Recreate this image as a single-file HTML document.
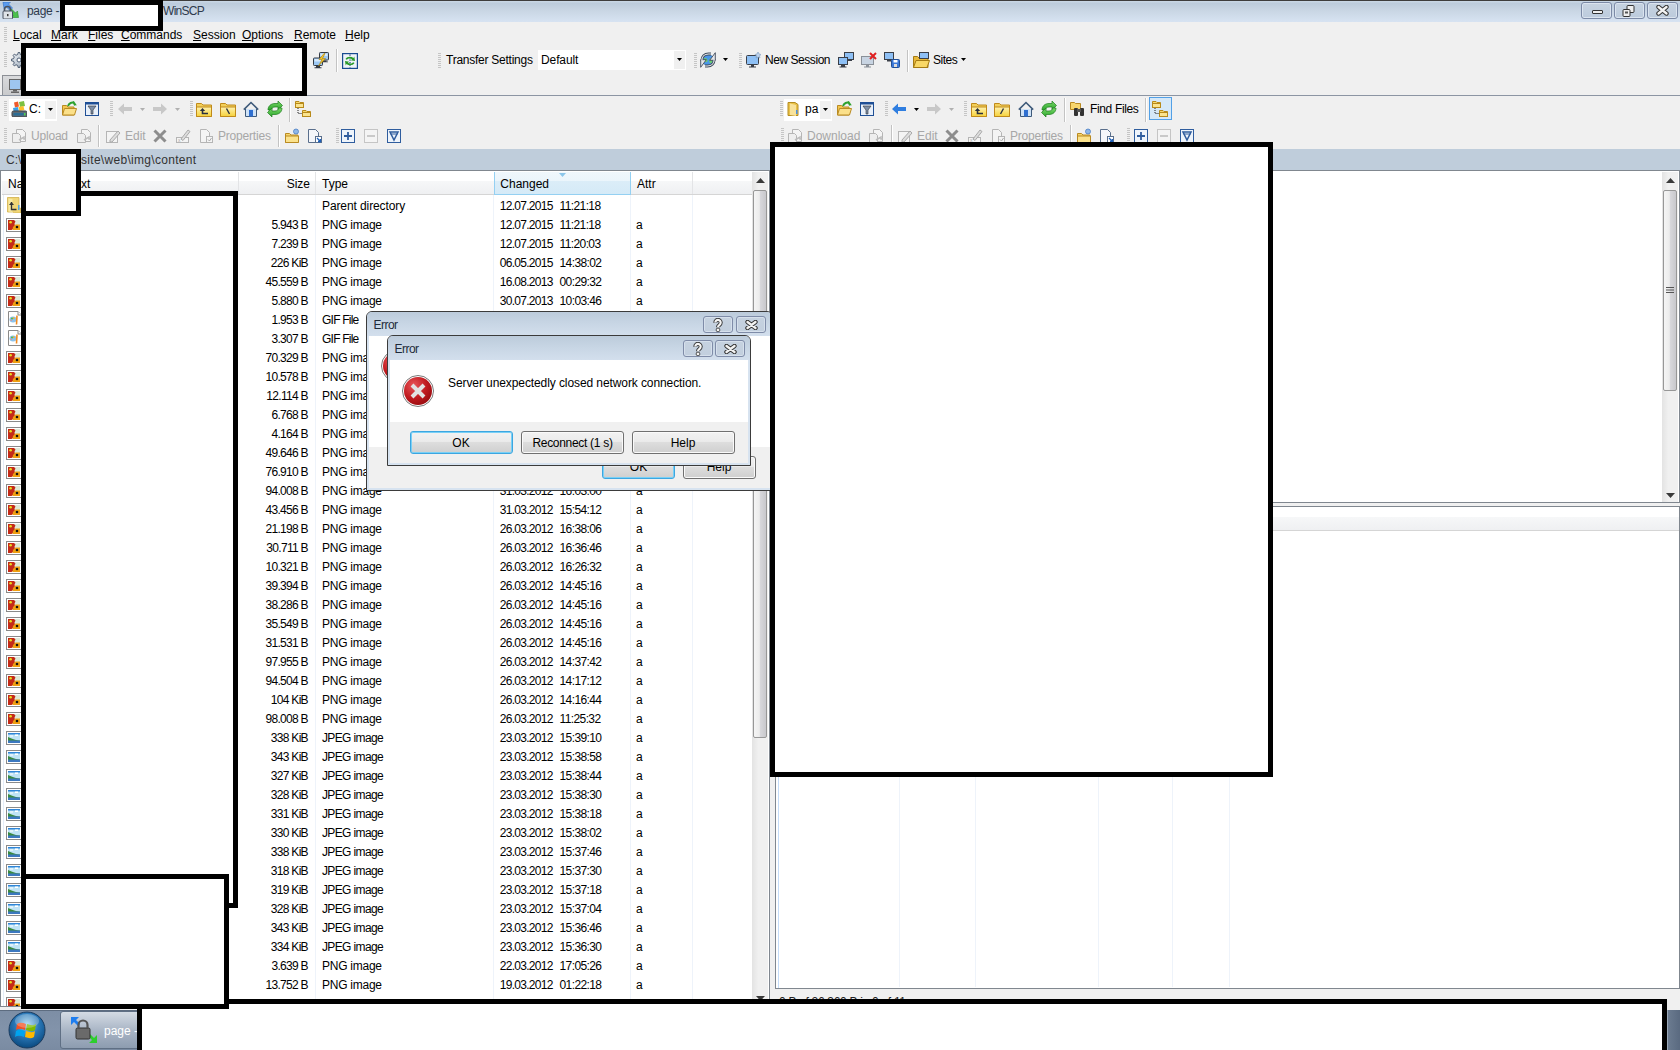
<!DOCTYPE html>
<html><head><meta charset="utf-8"><title>WinSCP</title><style>
*{margin:0;padding:0;box-sizing:border-box}
html,body{width:1680px;height:1050px;overflow:hidden;background:#f0f0f0;font-family:"Liberation Sans",sans-serif;font-size:12px;color:#000}
.a{position:absolute}
.t{position:absolute;white-space:nowrap;line-height:14px;font-size:12px}
.red{position:absolute;background:#fff;border:5px solid #000}
.grip{position:absolute;width:3px;background:repeating-linear-gradient(#c5c5c5 0 1px,transparent 1px 2px)}
.sep{position:absolute;width:1px;background:#bcbcbc;border-right:1px solid #fff}
.dis{color:#a3a3a3}
.u{text-decoration:underline}
.row{position:absolute;left:0;height:19px}
.ico{position:absolute;width:16px;height:16px}
</style></head><body>
<div class="a" style="left:0px;top:0px;width:1680px;height:22px;background:linear-gradient(#c8d6e4 0,#c8d6e4 2px,#bccbdb 3px,#c8d5e3 45%,#d7e3f2)"></div>
<div class="a" style="left:0px;top:0px;width:1680px;height:1px;background:#3e3d3c"></div>
<svg class="a" style="left:2px;top:2px" width="17" height="17" viewBox="0 0 17 17"><path d="M1 0h7.5l-2 2 4 4-2.5 2.5-4-4-2 2z" fill="#5a9cf0" stroke="#2f6cc0" stroke-width=".6"/><path d="M16.5 15.5h-7.5l2-2-4-4 2.5-2.5 4 4 2-2z" fill="#4cc04c" stroke="#2a8a2a" stroke-width=".6"/><path d="M2.5 9.5v-2a3 3 0 0 1 6 0v2" stroke="#4a5260" stroke-width="1.6" fill="none"/><rect x="1" y="9" width="9.5" height="8" rx="1" fill="#dfe3e8" stroke="#4a5260"/><rect x="5.2" y="12" width="1.2" height="2.2" fill="#111"/></svg>
<div class="t" style="left:27px;top:3.84px;color:#2e3a4c;letter-spacing:-0.3px">page -</div>
<div class="t" style="left:163px;top:3.84px;color:#2e3a4c;letter-spacing:-0.7px">WinSCP</div>
<div class="a" style="left:1581px;top:2px;width:31px;height:17px;border:1px solid #7c8aa6;border-radius:3px;background:linear-gradient(#c7d3e1,#bccbdc);box-shadow:inset 0 0 0 1px #dbe4ef"></div>
<div class="a" style="left:1614px;top:2px;width:31px;height:17px;border:1px solid #7c8aa6;border-radius:3px;background:linear-gradient(#c7d3e1,#bccbdc);box-shadow:inset 0 0 0 1px #dbe4ef"></div>
<div class="a" style="left:1647px;top:2px;width:31px;height:17px;border:1px solid #7c8aa6;border-radius:3px;background:linear-gradient(#c7d3e1,#bccbdc);box-shadow:inset 0 0 0 1px #dbe4ef"></div>
<div class="a" style="left:1592px;top:10px;width:11px;height:4px;background:#eee;border:1px solid #333;border-radius:1px"></div>
<svg class="a" style="left:1622px;top:5px" width="14" height="12" viewBox="0 0 14 12"><rect x="5" y="0.5" width="7" height="7" rx="1" fill="#eee" stroke="#333"/><rect x="1" y="4.5" width="7" height="7" rx="1" fill="#eee" stroke="#333"/><rect x="3" y="6.5" width="3" height="2" fill="#555"/></svg>
<svg class="a" style="left:1656px;top:5px" width="13" height="11" viewBox="0 0 13 11"><path d="M2.5 2l8 6.5M10.5 2l-8 6.5" stroke="#333" stroke-width="4.4" stroke-linecap="round"/><path d="M2.5 2l8 6.5M10.5 2l-8 6.5" stroke="#f2f2f2" stroke-width="2.4" stroke-linecap="round"/></svg>
<div class="grip" style="left:4px;top:27px;height:15px"></div>
<div class="t" style="left:13px;top:27.84px;color:#000"><span class="u">L</span>ocal</div>
<div class="t" style="left:51px;top:27.84px;color:#000"><span class="u">M</span>ark</div>
<div class="t" style="left:88px;top:27.84px;color:#000"><span class="u">F</span>iles</div>
<div class="t" style="left:121px;top:27.84px;color:#000"><span class="u">C</span>ommands</div>
<div class="t" style="left:193px;top:27.84px;color:#000"><span class="u">S</span>ession</div>
<div class="t" style="left:242px;top:27.84px;color:#000"><span class="u">O</span>ptions</div>
<div class="t" style="left:294px;top:27.84px;color:#000"><span class="u">R</span>emote</div>
<div class="t" style="left:345px;top:27.84px;color:#000"><span class="u">H</span>elp</div>
<div class="grip" style="left:4px;top:52px;height:15px"></div>
<svg class="a" style="left:11px;top:52px" width="16" height="16" viewBox="0 0 16 16"><defs><linearGradient id="gg" x1="0" y1="0" x2="1" y2="1"><stop offset="0" stop-color="#f2f5f8"/><stop offset="1" stop-color="#9aa8b8"/></linearGradient></defs><path d="M13.47 6.78 L15.45 7.10 L15.45 8.90 L13.47 9.22 L12.73 11.00 L13.90 12.63 L12.63 13.90 L11.00 12.73 L9.22 13.47 L8.90 15.45 L7.10 15.45 L6.78 13.47 L5.00 12.73 L3.37 13.90 L2.10 12.63 L3.27 11.00 L2.53 9.22 L0.55 8.90 L0.55 7.10 L2.53 6.78 L3.27 5.00 L2.10 3.37 L3.37 2.10 L5.00 3.27 L6.78 2.53 L7.10 0.55 L8.90 0.55 L9.22 2.53 L11.00 3.27 L12.63 2.10 L13.90 3.37 L12.73 5.00Z" fill="url(#gg)" stroke="#3f5068" stroke-width=".9"/><circle cx="8" cy="8" r="2" fill="#fff" stroke="#3f5068" stroke-width=".9"/></svg>
<svg class="a" style="left:313px;top:52px" width="16" height="17" viewBox="0 0 16 17"><rect x="6.5" y="0.5" width="9" height="7.5" rx=".8" fill="#9cc8f4" stroke="#343a44"/><rect x="7.5" y="1.5" width="7" height="2.5" fill="#d6e9fb"/><path d="M9.5 8.5h4v1h1.5v.8h-6" fill="#343a44"/><rect x="0.5" y="6" width="9" height="7.5" rx=".8" fill="#9cc8f4" stroke="#343a44"/><rect x="1.5" y="7" width="7" height="2.5" fill="#d6e9fb"/><path d="M3 14h4v1.2h1.5v1h-7v-1h1.5z" fill="#343a44"/><path d="M11 1.5l-5 6h3l-3.5 6.5 7-7.5h-3l2.5-5z" fill="#f4c52a" stroke="#a8800e" stroke-width=".6"/></svg>
<div class="a" style="left:336px;top:49px;width:1px;height:23px;background:#c3c3c3"></div><div class="a" style="left:337px;top:49px;width:1px;height:23px;background:#fff"></div>
<svg class="a" style="left:342px;top:53px" width="16" height="16" viewBox="0 0 16 16"><rect x="0.6" y="0.6" width="14.8" height="14.8" fill="#eef3f9" stroke="#184a90" stroke-width="1.2"/><path d="M8 1.5v13" stroke="#1d3f7a" stroke-width="1.2" stroke-dasharray="1.2 1.3"/><path d="M3.5 6c1.5-2.5 5.5-3 8-1l.8-1.5.7 4.5-4.3-.8 1.5-.9c-1.8-1.2-4.2-1-5.3.5z" fill="#2a9a2a"/><path d="M12.5 10c-1.5 2.5-5.5 3-8 1l-.8 1.5-.7-4.5 4.3.8-1.5.9c1.8 1.2 4.2 1 5.3-.5z" fill="#2a9a2a"/></svg>
<div class="grip" style="left:438px;top:53px;height:15px"></div>
<div class="t" style="left:446px;top:52.84px;letter-spacing:-0.25px">Transfer Settings</div>
<div class="a" style="left:538px;top:50px;width:148px;height:20px;background:#fff"></div>
<div class="a" style="left:674px;top:51px;width:11px;height:18px;background:#f0f0f0"></div>
<svg class="a" style="left:677px;top:58px" width="5" height="3" viewBox="0 0 5 3"><path d="M0 0h5l-2.5 3z" fill="#000"/></svg>
<div class="t" style="left:541px;top:52.84px;letter-spacing:-0.1px">Default</div>
<div class="grip" style="left:694px;top:53px;height:15px"></div>
<svg class="a" style="left:700px;top:52px" width="16" height="16" viewBox="0 0 16 16"><circle cx="8" cy="8" r="5.6" fill="#4a96e8" stroke="#2a6ab0" stroke-width=".6"/><path d="M4 6.5c1.5-1 3 0 3.5 1.5s-1 2.5-2.5 2-1.5-2.5-1-3.5zM10 6.5c1.5 0 2.5 1 2.5 2.5s-1.5 2.5-2.5 2-1-3.5 0-4.5z" fill="#6cd06c"/><path d="M1.8 8.8C1.8 4.6 4.5 2 8.5 2h2.5" stroke="#3e4a5a" stroke-width="2.8" fill="none"/><path d="M14.2 7.2c0 4.2-2.7 6.8-6.7 6.8H5" stroke="#3e4a5a" stroke-width="2.8" fill="none"/><path d="M15.3 .7v7.6h-5.6z" fill="#e4e6ea" stroke="#3e4a5a" stroke-width=".9" stroke-linejoin="round"/><path d="M.7 15.3V7.7h5.6z" fill="#e4e6ea" stroke="#3e4a5a" stroke-width=".9" stroke-linejoin="round"/><path d="M1.8 8.8C1.8 4.6 4.5 2 8.5 2h2.5" stroke="#e4e6ea" stroke-width="1.2" fill="none"/><path d="M14.2 7.2c0 4.2-2.7 6.8-6.7 6.8H5" stroke="#e4e6ea" stroke-width="1.2" fill="none"/></svg>
<svg class="a" style="left:723px;top:58px" width="5" height="3" viewBox="0 0 5 3"><path d="M0 0h5l-2.5 3z" fill="#000"/></svg>
<div class="grip" style="left:739px;top:53px;height:15px"></div>
<svg class="a" style="left:745px;top:52px" width="16" height="16" viewBox="0 0 16 16"><rect x="1.5" y="3.5" width="12" height="9" rx="1" fill="#8ec0f5" stroke="#3a3f48"/><path d="M6 13h3v1.5h2v1h-7v-1h2z" fill="#3a3f48"/><path d="M13 0l1 2 2 .5-1.5 1.5.5 2-2-1-2 1 .5-2L10 2.5l2-.5z" fill="#bcd2ec" stroke="#6b8bb0" stroke-width=".5"/></svg>
<div class="t" style="left:765px;top:52.84px;letter-spacing:-0.45px">New Session</div>
<svg class="a" style="left:838px;top:52px" width="16" height="16" viewBox="0 0 16 16"><rect x="6.5" y="0.5" width="9" height="7" fill="#8ec0f5" stroke="#3a3f48"/><rect x="0.5" y="5.5" width="9" height="7" fill="#8ec0f5" stroke="#3a3f48"/><path d="M3 13h4v1.5h1.5v1h-7v-1h1.5z" fill="#3a3f48"/><path d="M10 8h4v1h-4z" fill="#3a3f48"/></svg>
<svg class="a" style="left:861px;top:52px" width="16" height="16" viewBox="0 0 16 16"><rect x="0.5" y="4.5" width="12" height="8" fill="#c8d4e2" stroke="#8a9098"/><path d="M5 13h3v1.5h2v1h-7v-1h2z" fill="#8a9098"/><path d="M9 1l6 6M15 1l-6 6" stroke="#e02020" stroke-width="2"/></svg>
<svg class="a" style="left:884px;top:52px" width="16" height="16" viewBox="0 0 16 16"><rect x="0.5" y="0.5" width="9" height="7" fill="#8ec0f5" stroke="#3a3f48"/><path d="M3 8h4v1.5h-4z" fill="#3a3f48"/><rect x="7.5" y="7.5" width="8" height="8" rx="1" fill="#3b78d8" stroke="#214f96"/><rect x="9.5" y="8" width="4" height="2.5" fill="#fff"/><rect x="10" y="12" width="3" height="3" fill="#ddd"/></svg>
<div class="a" style="left:907px;top:50px;width:1px;height:22px;background:#c3c3c3"></div><div class="a" style="left:908px;top:50px;width:1px;height:22px;background:#fff"></div>
<svg class="a" style="left:913px;top:52px" width="17" height="16" viewBox="0 0 17 16"><path d="M0.5 4.5h4l1.5 1.5h9v9.5h-14.5z" fill="#e8b839" stroke="#a47a14"/><rect x="6.5" y="0.5" width="9" height="6" fill="#8ec0f5" stroke="#3a3f48"/><path d="M0.5 15.5l2.5-7h13.5l-2.5 7z" fill="#f8d766" stroke="#a47a14"/></svg>
<div class="t" style="left:933px;top:52.84px;letter-spacing:-0.5px">Sites</div>
<svg class="a" style="left:961px;top:58px" width="5" height="3" viewBox="0 0 5 3"><path d="M0 0h5l-2.5 3z" fill="#000"/></svg>
<div class="a" style="left:0px;top:95px;width:1680px;height:1px;background:#8c95a3"></div>
<div class="a" style="left:2px;top:75px;width:100px;height:20px;background:linear-gradient(#d9dadc,#c9cacc);border:1px solid #8d9096;border-bottom:none"></div>
<svg class="a" style="left:9px;top:79px" width="12" height="14" viewBox="0 0 12 14"><rect x="0.5" y="0.5" width="11" height="10" fill="#9ec6f0" stroke="#666"/><rect x="4" y="11" width="4" height="1.5" fill="#666"/><rect x="2" y="12.5" width="8" height="1.5" fill="#666"/></svg>
<div class="grip" style="left:4px;top:101px;height:15px"></div>
<div class="a" style="left:9px;top:99px;width:48px;height:22px;background:#fff"></div>
<div class="a" style="left:45px;top:101px;width:11px;height:18px;background:#f0f0f0"></div>
<svg class="a" style="left:11px;top:101px" width="16" height="16" viewBox="0 0 16 16"><path d="M3 1.5l4-1 1 5-4 1z" fill="#f05a2a"/><path d="M8 1l5-1 1 5-5 1z" fill="#7cc142"/><path d="M2 7l5-1 .8 4-5 1z" fill="#3aa0e8"/><path d="M7.5 6l5-1 .8 4-5 1z" fill="#fbc02d"/><rect x="1" y="10" width="15" height="6" rx="1.5" fill="#5b6b78" stroke="#444"/><rect x="2.5" y="12" width="10" height="2.5" fill="#2c6e96"/><rect x="13" y="12" width="1.5" height="2.5" fill="#4ed24e"/></svg>
<div class="t" style="left:29px;top:101.84px;">C:</div>
<svg class="a" style="left:48px;top:108px" width="5" height="3" viewBox="0 0 5 3"><path d="M0 0h5l-2.5 3z" fill="#000"/></svg>
<svg class="a" style="left:61px;top:101px" width="16" height="16" viewBox="0 0 16 16"><path d="M1.5 4.5h4l1.5 1.5h6v8h-11.5z" fill="#f2c650" stroke="#b98a22"/><path d="M1.5 14l2-6.5h12l-2 6.5z" fill="#fbe08a" stroke="#b98a22"/><path d="M7 5c1-3 4-4 6-3l-1-1.5M13 2l1 2.5" stroke="#2ea12e" stroke-width="2" fill="none"/></svg>
<svg class="a" style="left:84px;top:101px" width="16" height="16" viewBox="0 0 16 16"><rect x="1.5" y="1.5" width="13" height="13" fill="#e8f0fa" stroke="#1f4f95"/><rect x="1.5" y="1.5" width="13" height="2" fill="#1f4f95"/><path d="M4 5h8l-3 4v4h-2v-4z" fill="#7d8fa8" stroke="#333" stroke-width=".6"/></svg>
<div class="grip" style="left:110px;top:101px;height:15px"></div>
<svg class="a" style="left:117px;top:101px" width="16" height="16" viewBox="0 0 16 16"><path d="M1 8l6-5.5v3.5h8v4h-8v3.5z" fill="#c8c8c8"/></svg>
<svg class="a" style="left:140px;top:108px" width="5" height="3" viewBox="0 0 5 3"><path d="M0 0h5l-2.5 3z" fill="#b0b0b0"/></svg>
<svg class="a" style="left:152px;top:101px" width="16" height="16" viewBox="0 0 16 16"><path d="M15 8l-6-5.5v3.5h-8v4h8v3.5z" fill="#c8c8c8"/></svg>
<svg class="a" style="left:175px;top:108px" width="5" height="3" viewBox="0 0 5 3"><path d="M0 0h5l-2.5 3z" fill="#b0b0b0"/></svg>
<div class="grip" style="left:190px;top:101px;height:15px"></div>
<svg class="a" style="left:196px;top:101px" width="16" height="16" viewBox="0 0 16 16"><defs><linearGradient id="fg" x1="0" y1="0" x2="0" y2="1"><stop offset="0" stop-color="#fff2b0"/><stop offset="1" stop-color="#f6d23a"/></linearGradient></defs><path d="M0.5 2.5h5l1.5 1.5h8.5v11.5h-15z" fill="#f2cf5a" stroke="#c08a1a"/><path d="M0.5 6h15v9.5h-15z" fill="url(#fg)" stroke="#c08a1a"/><path d="M6.5 9v3.5h5.5" stroke="#2a3140" stroke-width="1.6" fill="none"/><path d="M3.8 10l2.7-3 2.7 3z" fill="#2a3140"/></svg>
<svg class="a" style="left:220px;top:101px" width="16" height="16" viewBox="0 0 16 16"><defs><linearGradient id="fg" x1="0" y1="0" x2="0" y2="1"><stop offset="0" stop-color="#fff2b0"/><stop offset="1" stop-color="#f6d23a"/></linearGradient></defs><path d="M0.5 2.5h5l1.5 1.5h8.5v11.5h-15z" fill="#f2cf5a" stroke="#c08a1a"/><path d="M0.5 6h15v9.5h-15z" fill="url(#fg)" stroke="#c08a1a"/><path d="M6.5 7.5l3 5.5" stroke="#2a3140" stroke-width="1.4"/></svg>
<svg class="a" style="left:243px;top:101px" width="16" height="16" viewBox="0 0 16 16"><path d="M2.5 8v7.5h11V8" fill="#cfe2f6" stroke="#3e5a7a"/><path d="M0.8 8.6L8 1.5l7.2 7.1" fill="none" stroke="#3e5a7a" stroke-width="1.6"/><rect x="6" y="9" width="4" height="6.5" fill="#2f6fd0"/></svg>
<svg class="a" style="left:267px;top:101px" width="16" height="16" viewBox="0 0 16 16"><defs><linearGradient id="rfg" x1="0" y1="0" x2="0" y2="1"><stop offset="0" stop-color="#7ad86a"/><stop offset="1" stop-color="#2aa52a"/></linearGradient></defs><path d="M1 9C1 5 4 2.5 8 2.5h3V0l4.5 4.5L11 9V6H8C6 6 4.5 7 4.5 9z" fill="url(#rfg)" stroke="#1d7d1d" stroke-width=".7"/><path d="M15 7c0 4-3 6.5-7 6.5H5V16L.5 11.5 5 7v3h3c2 0 3.5-1 3.5-3z" fill="url(#rfg)" stroke="#1d7d1d" stroke-width=".7"/></svg>
<div class="a" style="left:289px;top:98px;width:1px;height:24px;background:#c3c3c3"></div><div class="a" style="left:290px;top:98px;width:1px;height:24px;background:#fff"></div>
<svg class="a" style="left:295px;top:101px" width="16" height="16" viewBox="0 0 16 16"><path d="M0.5 0.5h3.5l1 1h3.5v5h-8z" fill="#f7d86a" stroke="#b88a1a"/><rect x="0.5" y="2.5" width="8" height="4" fill="#fbe48e" stroke="#b88a1a"/><path d="M7.5 9.5h3.5l1 1h3.5v5h-8z" fill="#f7d86a" stroke="#b88a1a"/><rect x="7.5" y="11.5" width="8" height="4" fill="#fbe48e" stroke="#b88a1a"/><path d="M3 7v5.5h4" stroke="#222" stroke-dasharray="1 1" fill="none"/></svg>
<div class="grip" style="left:4px;top:128px;height:15px"></div>
<svg class="a" style="left:11px;top:128px" width="16" height="16" viewBox="0 0 16 16"><path d="M5.5 1.5h6l3 3v9h-9z" fill="#f4f4f4" stroke="#b5b5b5"/><path d="M1.5 5.5h6l2 2v7h-8z" fill="#eee" stroke="#b5b5b5"/><path d="M8 12l5-3v2h2" stroke="#bcbcbc" stroke-width="1.5" fill="none"/></svg>
<div class="t" style="left:31px;top:128.84px;color:#a7a7a7;letter-spacing:-0.2px">Upload</div>
<svg class="a" style="left:76px;top:128px" width="16" height="16" viewBox="0 0 16 16"><path d="M5.5 1.5h6l3 3v9h-9z" fill="#f4f4f4" stroke="#b5b5b5"/><path d="M1.5 5.5h6l2 2v7h-8z" fill="#eee" stroke="#b5b5b5"/><path d="M8 12l5-3v2h2" stroke="#bcbcbc" stroke-width="1.5" fill="none"/></svg>
<div class="a" style="left:98px;top:125px;width:1px;height:22px;background:#c3c3c3"></div><div class="a" style="left:99px;top:125px;width:1px;height:22px;background:#fff"></div>
<svg class="a" style="left:105px;top:128px" width="16" height="16" viewBox="0 0 16 16"><rect x="1.5" y="3.5" width="11" height="11" fill="#f4f4f4" stroke="#b5b5b5"/><path d="M5 12l8-9 2 2-8 9h-2z" fill="#ddd" stroke="#aaa"/></svg>
<div class="t" style="left:125px;top:128.84px;color:#a7a7a7">Edit</div>
<svg class="a" style="left:152px;top:128px" width="16" height="16" viewBox="0 0 16 16"><path d="M2.5 2.5l11 11M13.5 2.5l-11 11" stroke="#8d8d8d" stroke-width="3"/></svg>
<svg class="a" style="left:175px;top:128px" width="16" height="16" viewBox="0 0 16 16"><rect x="1.5" y="9.5" width="12" height="5" fill="#f4f4f4" stroke="#b5b5b5"/><path d="M6 11l7-9 2 1.5-7 9z" fill="#ddd" stroke="#aaa"/><text x="3" y="14" font-size="5" fill="#aaa">x</text></svg>
<svg class="a" style="left:198px;top:128px" width="16" height="16" viewBox="0 0 16 16"><path d="M2.5 1.5h6l3 3v10h-9z" fill="#f4f4f4" stroke="#b5b5b5"/><rect x="8.5" y="8.5" width="6" height="6" fill="#f4f4f4" stroke="#b5b5b5"/><path d="M10 11.5l1.5 1.5 2-3" stroke="#aaa" fill="none"/></svg>
<div class="t" style="left:218px;top:128.84px;color:#a7a7a7;letter-spacing:-0.2px">Properties</div>
<div class="a" style="left:278px;top:125px;width:1px;height:22px;background:#c3c3c3"></div><div class="a" style="left:279px;top:125px;width:1px;height:22px;background:#fff"></div>
<svg class="a" style="left:284px;top:128px" width="16" height="16" viewBox="0 0 16 16"><path d="M1.5 5.5h4l1.5 1.5h7v7.5h-12.5z" fill="#f7d66d" stroke="#b98a22"/><path d="M1.5 8h13v6.5h-13z" fill="#fbe28c" stroke="#b98a22"/><circle cx="12" cy="3.5" r="2.5" fill="#8fb7e8" stroke="#4b7fc4" stroke-width=".8"/></svg>
<svg class="a" style="left:307px;top:128px" width="16" height="16" viewBox="0 0 16 16"><path d="M1.5 1.5h7l3 3v10h-10z" fill="#f4f6fa" stroke="#5a6f8c"/><rect x="8.5" y="8.5" width="6" height="6" fill="#fff" stroke="#5a6f8c"/><path d="M10 10l3.5 3.5M13.5 11v2.5h-2.5" stroke="#1d5fb8" stroke-width="1.3" fill="none"/></svg>
<div class="grip" style="left:336px;top:128px;height:15px"></div>
<svg class="a" style="left:340px;top:128px" width="16" height="16" viewBox="0 0 16 16"><rect x="1.5" y="1.5" width="13" height="13" fill="#eef4fb" stroke="#2f5d9e"/><path d="M8 4v8M4 8h8" stroke="#2f5d9e" stroke-width="1.8"/></svg>
<svg class="a" style="left:363px;top:128px" width="16" height="16" viewBox="0 0 16 16"><rect x="1.5" y="1.5" width="13" height="13" fill="#f4f4f4" stroke="#c5c5c5"/><path d="M4 8h8" stroke="#c5c5c5" stroke-width="1.8"/></svg>
<svg class="a" style="left:386px;top:128px" width="16" height="16" viewBox="0 0 16 16"><rect x="1.5" y="1.5" width="13" height="13" fill="#eef4fb" stroke="#2f5d9e"/><path d="M4 4h8l-4 8z" fill="none" stroke="#2f5d9e" stroke-width="1.5"/><path d="M4.5 6h7" stroke="#2f5d9e"/></svg>
<div class="grip" style="left:780px;top:101px;height:15px"></div>
<div class="a" style="left:784px;top:99px;width:48px;height:22px;background:#fff"></div>
<div class="a" style="left:820px;top:101px;width:11px;height:18px;background:#f0f0f0"></div>
<svg class="a" style="left:786px;top:101px" width="16" height="16" viewBox="0 0 16 16"><path d="M2 1.5h7l3 2v11h-10z" fill="#e9c24a" stroke="#b58c20"/><path d="M4 2.5l6 1.5v11l-6-1z" fill="#f8e29a"/><rect x="10" y="9" width="1.5" height="4" fill="#4a90e2"/></svg>
<div class="t" style="left:805px;top:101.84px;">pa</div>
<svg class="a" style="left:823px;top:108px" width="5" height="3" viewBox="0 0 5 3"><path d="M0 0h5l-2.5 3z" fill="#000"/></svg>
<svg class="a" style="left:836px;top:101px" width="16" height="16" viewBox="0 0 16 16"><path d="M1.5 4.5h4l1.5 1.5h6v8h-11.5z" fill="#f2c650" stroke="#b98a22"/><path d="M1.5 14l2-6.5h12l-2 6.5z" fill="#fbe08a" stroke="#b98a22"/><path d="M7 5c1-3 4-4 6-3l-1-1.5M13 2l1 2.5" stroke="#2ea12e" stroke-width="2" fill="none"/></svg>
<svg class="a" style="left:859px;top:101px" width="16" height="16" viewBox="0 0 16 16"><rect x="1.5" y="1.5" width="13" height="13" fill="#e8f0fa" stroke="#1f4f95"/><rect x="1.5" y="1.5" width="13" height="2" fill="#1f4f95"/><path d="M4 5h8l-3 4v4h-2v-4z" fill="#7d8fa8" stroke="#333" stroke-width=".6"/></svg>
<div class="grip" style="left:885px;top:101px;height:15px"></div>
<svg class="a" style="left:891px;top:101px" width="16" height="16" viewBox="0 0 16 16"><path d="M1 8l6-5.5v3.5h8v4h-8v3.5z" fill="#2f7ee0"/></svg>
<svg class="a" style="left:914px;top:108px" width="5" height="3" viewBox="0 0 5 3"><path d="M0 0h5l-2.5 3z" fill="#000"/></svg>
<svg class="a" style="left:926px;top:101px" width="16" height="16" viewBox="0 0 16 16"><path d="M15 8l-6-5.5v3.5h-8v4h8v3.5z" fill="#c8c8c8"/></svg>
<svg class="a" style="left:949px;top:108px" width="5" height="3" viewBox="0 0 5 3"><path d="M0 0h5l-2.5 3z" fill="#b0b0b0"/></svg>
<div class="grip" style="left:964px;top:101px;height:15px"></div>
<svg class="a" style="left:971px;top:101px" width="16" height="16" viewBox="0 0 16 16"><defs><linearGradient id="fg" x1="0" y1="0" x2="0" y2="1"><stop offset="0" stop-color="#fff2b0"/><stop offset="1" stop-color="#f6d23a"/></linearGradient></defs><path d="M0.5 2.5h5l1.5 1.5h8.5v11.5h-15z" fill="#f2cf5a" stroke="#c08a1a"/><path d="M0.5 6h15v9.5h-15z" fill="url(#fg)" stroke="#c08a1a"/><path d="M6.5 9v3.5h5.5" stroke="#2a3140" stroke-width="1.6" fill="none"/><path d="M3.8 10l2.7-3 2.7 3z" fill="#2a3140"/></svg>
<svg class="a" style="left:994px;top:101px" width="16" height="16" viewBox="0 0 16 16"><defs><linearGradient id="fg" x1="0" y1="0" x2="0" y2="1"><stop offset="0" stop-color="#fff2b0"/><stop offset="1" stop-color="#f6d23a"/></linearGradient></defs><path d="M0.5 2.5h5l1.5 1.5h8.5v11.5h-15z" fill="#f2cf5a" stroke="#c08a1a"/><path d="M0.5 6h15v9.5h-15z" fill="url(#fg)" stroke="#c08a1a"/><path d="M9.5 7.5l-3 5.5" stroke="#2a3140" stroke-width="1.4"/></svg>
<svg class="a" style="left:1018px;top:101px" width="16" height="16" viewBox="0 0 16 16"><path d="M2.5 8v7.5h11V8" fill="#cfe2f6" stroke="#3e5a7a"/><path d="M0.8 8.6L8 1.5l7.2 7.1" fill="none" stroke="#3e5a7a" stroke-width="1.6"/><rect x="6" y="9" width="4" height="6.5" fill="#2f6fd0"/></svg>
<svg class="a" style="left:1041px;top:101px" width="16" height="16" viewBox="0 0 16 16"><defs><linearGradient id="rfg" x1="0" y1="0" x2="0" y2="1"><stop offset="0" stop-color="#7ad86a"/><stop offset="1" stop-color="#2aa52a"/></linearGradient></defs><path d="M1 9C1 5 4 2.5 8 2.5h3V0l4.5 4.5L11 9V6H8C6 6 4.5 7 4.5 9z" fill="url(#rfg)" stroke="#1d7d1d" stroke-width=".7"/><path d="M15 7c0 4-3 6.5-7 6.5H5V16L.5 11.5 5 7v3h3c2 0 3.5-1 3.5-3z" fill="url(#rfg)" stroke="#1d7d1d" stroke-width=".7"/></svg>
<div class="a" style="left:1064px;top:98px;width:1px;height:24px;background:#c3c3c3"></div><div class="a" style="left:1065px;top:98px;width:1px;height:24px;background:#fff"></div>
<svg class="a" style="left:1070px;top:101px" width="16" height="16" viewBox="0 0 16 16"><path d="M0.5 1.5h4l1 1h5v6h-10z" fill="#f7d66d" stroke="#b98a22"/><rect x="4" y="7" width="4" height="8" rx="1" fill="#333"/><rect x="10" y="7" width="4" height="8" rx="1" fill="#333"/><rect x="7" y="8" width="4" height="3" fill="#555"/></svg>
<div class="t" style="left:1090px;top:101.84px;letter-spacing:-0.35px">Find Files</div>
<div class="a" style="left:1145px;top:98px;width:1px;height:24px;background:#c3c3c3"></div><div class="a" style="left:1146px;top:98px;width:1px;height:24px;background:#fff"></div>
<div class="a" style="left:1149px;top:97px;width:23px;height:23px;background:#d5e8f8;border:1px solid #52a0e6"></div>
<svg class="a" style="left:1152px;top:101px" width="16" height="16" viewBox="0 0 16 16"><path d="M0.5 0.5h3.5l1 1h3.5v5h-8z" fill="#f7d86a" stroke="#b88a1a"/><rect x="0.5" y="2.5" width="8" height="4" fill="#fbe48e" stroke="#b88a1a"/><path d="M7.5 9.5h3.5l1 1h3.5v5h-8z" fill="#f7d86a" stroke="#b88a1a"/><rect x="7.5" y="11.5" width="8" height="4" fill="#fbe48e" stroke="#b88a1a"/><path d="M3 7v5.5h4" stroke="#222" stroke-dasharray="1 1" fill="none"/></svg>
<div class="grip" style="left:781px;top:128px;height:15px"></div>
<svg class="a" style="left:787px;top:128px" width="16" height="16" viewBox="0 0 16 16"><path d="M5.5 1.5h6l3 3v9h-9z" fill="#f4f4f4" stroke="#b5b5b5"/><path d="M1.5 5.5h6l2 2v7h-8z" fill="#eee" stroke="#b5b5b5"/><path d="M8 12l5-3v2h2" stroke="#bcbcbc" stroke-width="1.5" fill="none"/></svg>
<div class="t" style="left:807px;top:128.84px;color:#a7a7a7">Download</div>
<svg class="a" style="left:868px;top:128px" width="16" height="16" viewBox="0 0 16 16"><path d="M5.5 1.5h6l3 3v9h-9z" fill="#f4f4f4" stroke="#b5b5b5"/><path d="M1.5 5.5h6l2 2v7h-8z" fill="#eee" stroke="#b5b5b5"/><path d="M8 12l5-3v2h2" stroke="#bcbcbc" stroke-width="1.5" fill="none"/></svg>
<div class="a" style="left:891px;top:125px;width:1px;height:22px;background:#c3c3c3"></div><div class="a" style="left:892px;top:125px;width:1px;height:22px;background:#fff"></div>
<svg class="a" style="left:897px;top:128px" width="16" height="16" viewBox="0 0 16 16"><rect x="1.5" y="3.5" width="11" height="11" fill="#f4f4f4" stroke="#b5b5b5"/><path d="M5 12l8-9 2 2-8 9h-2z" fill="#ddd" stroke="#aaa"/></svg>
<div class="t" style="left:917px;top:128.84px;color:#a7a7a7">Edit</div>
<svg class="a" style="left:944px;top:128px" width="16" height="16" viewBox="0 0 16 16"><path d="M2.5 2.5l11 11M13.5 2.5l-11 11" stroke="#8d8d8d" stroke-width="3"/></svg>
<svg class="a" style="left:967px;top:128px" width="16" height="16" viewBox="0 0 16 16"><rect x="1.5" y="9.5" width="12" height="5" fill="#f4f4f4" stroke="#b5b5b5"/><path d="M6 11l7-9 2 1.5-7 9z" fill="#ddd" stroke="#aaa"/><text x="3" y="14" font-size="5" fill="#aaa">x</text></svg>
<svg class="a" style="left:990px;top:128px" width="16" height="16" viewBox="0 0 16 16"><path d="M2.5 1.5h6l3 3v10h-9z" fill="#f4f4f4" stroke="#b5b5b5"/><rect x="8.5" y="8.5" width="6" height="6" fill="#f4f4f4" stroke="#b5b5b5"/><path d="M10 11.5l1.5 1.5 2-3" stroke="#aaa" fill="none"/></svg>
<div class="t" style="left:1010px;top:128.84px;color:#a7a7a7;letter-spacing:-0.2px">Properties</div>
<div class="a" style="left:1070px;top:125px;width:1px;height:22px;background:#c3c3c3"></div><div class="a" style="left:1071px;top:125px;width:1px;height:22px;background:#fff"></div>
<svg class="a" style="left:1076px;top:128px" width="16" height="16" viewBox="0 0 16 16"><path d="M1.5 5.5h4l1.5 1.5h7v7.5h-12.5z" fill="#f7d66d" stroke="#b98a22"/><path d="M1.5 8h13v6.5h-13z" fill="#fbe28c" stroke="#b98a22"/><circle cx="12" cy="3.5" r="2.5" fill="#8fb7e8" stroke="#4b7fc4" stroke-width=".8"/></svg>
<svg class="a" style="left:1099px;top:128px" width="16" height="16" viewBox="0 0 16 16"><path d="M1.5 1.5h7l3 3v10h-10z" fill="#f4f6fa" stroke="#5a6f8c"/><rect x="8.5" y="8.5" width="6" height="6" fill="#fff" stroke="#5a6f8c"/><path d="M10 10l3.5 3.5M13.5 11v2.5h-2.5" stroke="#1d5fb8" stroke-width="1.3" fill="none"/></svg>
<div class="grip" style="left:1127px;top:128px;height:15px"></div>
<svg class="a" style="left:1133px;top:128px" width="16" height="16" viewBox="0 0 16 16"><rect x="1.5" y="1.5" width="13" height="13" fill="#eef4fb" stroke="#2f5d9e"/><path d="M8 4v8M4 8h8" stroke="#2f5d9e" stroke-width="1.8"/></svg>
<svg class="a" style="left:1156px;top:128px" width="16" height="16" viewBox="0 0 16 16"><rect x="1.5" y="1.5" width="13" height="13" fill="#f4f4f4" stroke="#c5c5c5"/><path d="M4 8h8" stroke="#c5c5c5" stroke-width="1.8"/></svg>
<svg class="a" style="left:1179px;top:128px" width="16" height="16" viewBox="0 0 16 16"><rect x="1.5" y="1.5" width="13" height="13" fill="#eef4fb" stroke="#2f5d9e"/><path d="M4 4h8l-4 8z" fill="none" stroke="#2f5d9e" stroke-width="1.5"/><path d="M4.5 6h7" stroke="#2f5d9e"/></svg>
<div class="a" style="left:0px;top:149px;width:770px;height:21px;background:#bfcddb"></div>
<div class="t" style="left:6px;top:152.84px;color:#333">C:\</div>
<div class="t" style="left:81px;top:152.84px;color:#333;letter-spacing:0.3px">site\web\img\content</div>
<div class="a" style="left:0px;top:170px;width:770px;height:1px;background:#80878f"></div>
<div class="a" style="left:0px;top:171px;width:770px;height:836px;background:#fff;border:1px solid #80878f;border-top:none"></div>
<div class="a" style="left:2px;top:181px;width:750px;height:13px;background:linear-gradient(#f6f7f8,#eff0f2)"></div>
<div class="a" style="left:2px;top:194px;width:750px;height:1px;background:#d5d5d5"></div>
<div class="a" style="left:238px;top:172px;width:1px;height:22px;background:#e3e4e6"></div>
<div class="a" style="left:315px;top:172px;width:1px;height:22px;background:#e3e4e6"></div>
<div class="a" style="left:692px;top:172px;width:1px;height:22px;background:#e3e4e6"></div>
<div class="a" style="left:494px;top:172px;width:137px;height:23px;background:linear-gradient(#f0f7fc 0,#ebf5fb 40%,#dbedf8 41%,#d5eaf7);border:1px solid #94d0f2;border-top:none"></div>
<svg class="a" style="left:559px;top:173px" width="7" height="4" viewBox="0 0 7 4"><path d="M0 0h7l-3.5 4z" fill="#8cc6ea"/></svg>
<div class="t" style="left:8px;top:176.84px;">Na</div>
<div class="t" style="left:81px;top:176.84px;">xt</div>
<div class="t" style="right:1370px;top:176.84px;">Size</div>
<div class="t" style="left:322px;top:176.84px;">Type</div>
<div class="t" style="left:500.3px;top:176.84px;">Changed</div>
<div class="t" style="left:637px;top:176.84px;">Attr</div>
<div class="a" style="left:315px;top:195px;width:1px;height:812px;background:#eef3fa"></div>
<div class="a" style="left:493px;top:195px;width:1px;height:812px;background:#eef3fa"></div>
<div class="a" style="left:630px;top:195px;width:1px;height:812px;background:#eef3fa"></div>
<div class="a" style="left:692px;top:195px;width:1px;height:812px;background:#eef3fa"></div>
<div class="a" style="left:3px;top:195px;width:1px;height:812px;background:#e4edf8"></div>
<svg class="a" style="left:7px;top:197px" width="14" height="16" viewBox="0 0 14 16"><path d="M0.5 0.5h11.5v10.5h1.5v5h-6l-1.5 -1h-5.5z" fill="#f0d676" stroke="#d2b04a" stroke-width=".8"/><path d="M1.5 1.5l4 .5v13l-4-.5z" fill="#f8eaa2"/><rect x="11" y="8" width="1.5" height="5" fill="#4aa0e6"/><path d="M4.5 5v7.5h5" stroke="#333" stroke-width="1.4" fill="none"/><path d="M2 8l2.5-3 2.5 3z" fill="#333"/></svg>
<div class="t" style="left:322px;top:199.04px;letter-spacing:-0.1px">Parent directory</div>
<div class="t" style="left:499.7px;top:199.04px;letter-spacing:-0.7px">12.07.2015</div>
<div class="t" style="left:559.5px;top:199.04px;letter-spacing:-0.6px">11:21:18</div>
<svg class="a" style="left:6px;top:218px" width="16" height="14" viewBox="0 0 16 14"><rect x="0.5" y="0.5" width="15" height="13" fill="#fff" stroke="#8a8a8a"/><rect x="2" y="2" width="12" height="10" fill="#dfe9d6"/><path d="M2 2h6l1.5 1.5-1 2 .5 3-1.5 2-2 1.5h-3.5z" fill="#c42a17"/><circle cx="4.6" cy="4.2" r="1.3" fill="#e6e020"/><path d="M14 12h-7.5l.5-3 2.5-2.5h4.5z" fill="#f0a012"/><circle cx="11" cy="9" r="1.3" fill="#111"/></svg>
<div class="t" style="right:1372.1px;top:218.04px;letter-spacing:-0.7px">5.943 B</div>
<div class="t" style="left:322px;top:218.04px;letter-spacing:-0.25px">PNG image</div>
<div class="t" style="left:499.7px;top:218.04px;letter-spacing:-0.7px">12.07.2015</div>
<div class="t" style="left:559.5px;top:218.04px;letter-spacing:-0.6px">11:21:18</div>
<div class="t" style="left:636px;top:218.04px;">a</div>
<svg class="a" style="left:6px;top:237px" width="16" height="14" viewBox="0 0 16 14"><rect x="0.5" y="0.5" width="15" height="13" fill="#fff" stroke="#8a8a8a"/><rect x="2" y="2" width="12" height="10" fill="#dfe9d6"/><path d="M2 2h6l1.5 1.5-1 2 .5 3-1.5 2-2 1.5h-3.5z" fill="#c42a17"/><circle cx="4.6" cy="4.2" r="1.3" fill="#e6e020"/><path d="M14 12h-7.5l.5-3 2.5-2.5h4.5z" fill="#f0a012"/><circle cx="11" cy="9" r="1.3" fill="#111"/></svg>
<div class="t" style="right:1372.1px;top:237.04px;letter-spacing:-0.7px">7.239 B</div>
<div class="t" style="left:322px;top:237.04px;letter-spacing:-0.25px">PNG image</div>
<div class="t" style="left:499.7px;top:237.04px;letter-spacing:-0.7px">12.07.2015</div>
<div class="t" style="left:559.5px;top:237.04px;letter-spacing:-0.6px">11:20:03</div>
<div class="t" style="left:636px;top:237.04px;">a</div>
<svg class="a" style="left:6px;top:256px" width="16" height="14" viewBox="0 0 16 14"><rect x="0.5" y="0.5" width="15" height="13" fill="#fff" stroke="#8a8a8a"/><rect x="2" y="2" width="12" height="10" fill="#dfe9d6"/><path d="M2 2h6l1.5 1.5-1 2 .5 3-1.5 2-2 1.5h-3.5z" fill="#c42a17"/><circle cx="4.6" cy="4.2" r="1.3" fill="#e6e020"/><path d="M14 12h-7.5l.5-3 2.5-2.5h4.5z" fill="#f0a012"/><circle cx="11" cy="9" r="1.3" fill="#111"/></svg>
<div class="t" style="right:1372.1px;top:256.04px;letter-spacing:-0.7px">226 KiB</div>
<div class="t" style="left:322px;top:256.04px;letter-spacing:-0.25px">PNG image</div>
<div class="t" style="left:499.7px;top:256.04px;letter-spacing:-0.7px">06.05.2015</div>
<div class="t" style="left:559.5px;top:256.04px;letter-spacing:-0.6px">14:38:02</div>
<div class="t" style="left:636px;top:256.04px;">a</div>
<svg class="a" style="left:6px;top:275px" width="16" height="14" viewBox="0 0 16 14"><rect x="0.5" y="0.5" width="15" height="13" fill="#fff" stroke="#8a8a8a"/><rect x="2" y="2" width="12" height="10" fill="#dfe9d6"/><path d="M2 2h6l1.5 1.5-1 2 .5 3-1.5 2-2 1.5h-3.5z" fill="#c42a17"/><circle cx="4.6" cy="4.2" r="1.3" fill="#e6e020"/><path d="M14 12h-7.5l.5-3 2.5-2.5h4.5z" fill="#f0a012"/><circle cx="11" cy="9" r="1.3" fill="#111"/></svg>
<div class="t" style="right:1372.1px;top:275.04px;letter-spacing:-0.7px">45.559 B</div>
<div class="t" style="left:322px;top:275.04px;letter-spacing:-0.25px">PNG image</div>
<div class="t" style="left:499.7px;top:275.04px;letter-spacing:-0.7px">16.08.2013</div>
<div class="t" style="left:559.5px;top:275.04px;letter-spacing:-0.6px">00:29:32</div>
<div class="t" style="left:636px;top:275.04px;">a</div>
<svg class="a" style="left:6px;top:294px" width="16" height="14" viewBox="0 0 16 14"><rect x="0.5" y="0.5" width="15" height="13" fill="#fff" stroke="#8a8a8a"/><rect x="2" y="2" width="12" height="10" fill="#dfe9d6"/><path d="M2 2h6l1.5 1.5-1 2 .5 3-1.5 2-2 1.5h-3.5z" fill="#c42a17"/><circle cx="4.6" cy="4.2" r="1.3" fill="#e6e020"/><path d="M14 12h-7.5l.5-3 2.5-2.5h4.5z" fill="#f0a012"/><circle cx="11" cy="9" r="1.3" fill="#111"/></svg>
<div class="t" style="right:1372.1px;top:294.04px;letter-spacing:-0.7px">5.880 B</div>
<div class="t" style="left:322px;top:294.04px;letter-spacing:-0.25px">PNG image</div>
<div class="t" style="left:499.7px;top:294.04px;letter-spacing:-0.7px">30.07.2013</div>
<div class="t" style="left:559.5px;top:294.04px;letter-spacing:-0.6px">10:03:46</div>
<div class="t" style="left:636px;top:294.04px;">a</div>
<svg class="a" style="left:8px;top:311px" width="14" height="16" viewBox="0 0 14 16"><path d="M0.5 0.5h9.5l3.5 3.5v11.5h-13z" fill="#fff" stroke="#8a8a8a"/><path d="M10 0.5v3.5h3.5" fill="#fff" stroke="#8a8a8a"/><ellipse cx="5" cy="8.5" rx="3.5" ry="3" fill="#8cc2ea"/><circle cx="4" cy="7.5" r=".9" fill="#3cba3c"/><circle cx="5.7" cy="7.2" r=".9" fill="#f0b030"/><circle cx="3.2" cy="9.3" r=".8" fill="#e88c8c"/><path d="M9 4.5l-.5 9" stroke="#f08a20" stroke-width="1.6"/></svg>
<div class="t" style="right:1372.1px;top:313.04px;letter-spacing:-0.7px">1.953 B</div>
<div class="t" style="left:322px;top:313.04px;letter-spacing:-0.77px">GIF File</div>
<div class="t" style="left:499.7px;top:313.04px;letter-spacing:-0.7px">30.07.2013</div>
<div class="t" style="left:559.5px;top:313.04px;letter-spacing:-0.6px">10:03:40</div>
<div class="t" style="left:636px;top:313.04px;">a</div>
<svg class="a" style="left:8px;top:330px" width="14" height="16" viewBox="0 0 14 16"><path d="M0.5 0.5h9.5l3.5 3.5v11.5h-13z" fill="#fff" stroke="#8a8a8a"/><path d="M10 0.5v3.5h3.5" fill="#fff" stroke="#8a8a8a"/><ellipse cx="5" cy="8.5" rx="3.5" ry="3" fill="#8cc2ea"/><circle cx="4" cy="7.5" r=".9" fill="#3cba3c"/><circle cx="5.7" cy="7.2" r=".9" fill="#f0b030"/><circle cx="3.2" cy="9.3" r=".8" fill="#e88c8c"/><path d="M9 4.5l-.5 9" stroke="#f08a20" stroke-width="1.6"/></svg>
<div class="t" style="right:1372.1px;top:332.04px;letter-spacing:-0.7px">3.307 B</div>
<div class="t" style="left:322px;top:332.04px;letter-spacing:-0.77px">GIF File</div>
<div class="t" style="left:499.7px;top:332.04px;letter-spacing:-0.7px">30.07.2013</div>
<div class="t" style="left:559.5px;top:332.04px;letter-spacing:-0.6px">10:03:40</div>
<div class="t" style="left:636px;top:332.04px;">a</div>
<svg class="a" style="left:6px;top:351px" width="16" height="14" viewBox="0 0 16 14"><rect x="0.5" y="0.5" width="15" height="13" fill="#fff" stroke="#8a8a8a"/><rect x="2" y="2" width="12" height="10" fill="#dfe9d6"/><path d="M2 2h6l1.5 1.5-1 2 .5 3-1.5 2-2 1.5h-3.5z" fill="#c42a17"/><circle cx="4.6" cy="4.2" r="1.3" fill="#e6e020"/><path d="M14 12h-7.5l.5-3 2.5-2.5h4.5z" fill="#f0a012"/><circle cx="11" cy="9" r="1.3" fill="#111"/></svg>
<div class="t" style="right:1372.1px;top:351.04px;letter-spacing:-0.7px">70.329 B</div>
<div class="t" style="left:322px;top:351.04px;letter-spacing:-0.25px">PNG image</div>
<div class="t" style="left:499.7px;top:351.04px;letter-spacing:-0.7px">02.04.2012</div>
<div class="t" style="left:559.5px;top:351.04px;letter-spacing:-0.6px">18:20:14</div>
<div class="t" style="left:636px;top:351.04px;">a</div>
<svg class="a" style="left:6px;top:370px" width="16" height="14" viewBox="0 0 16 14"><rect x="0.5" y="0.5" width="15" height="13" fill="#fff" stroke="#8a8a8a"/><rect x="2" y="2" width="12" height="10" fill="#dfe9d6"/><path d="M2 2h6l1.5 1.5-1 2 .5 3-1.5 2-2 1.5h-3.5z" fill="#c42a17"/><circle cx="4.6" cy="4.2" r="1.3" fill="#e6e020"/><path d="M14 12h-7.5l.5-3 2.5-2.5h4.5z" fill="#f0a012"/><circle cx="11" cy="9" r="1.3" fill="#111"/></svg>
<div class="t" style="right:1372.1px;top:370.04px;letter-spacing:-0.7px">10.578 B</div>
<div class="t" style="left:322px;top:370.04px;letter-spacing:-0.25px">PNG image</div>
<div class="t" style="left:499.7px;top:370.04px;letter-spacing:-0.7px">02.04.2012</div>
<div class="t" style="left:559.5px;top:370.04px;letter-spacing:-0.6px">18:12:56</div>
<div class="t" style="left:636px;top:370.04px;">a</div>
<svg class="a" style="left:6px;top:389px" width="16" height="14" viewBox="0 0 16 14"><rect x="0.5" y="0.5" width="15" height="13" fill="#fff" stroke="#8a8a8a"/><rect x="2" y="2" width="12" height="10" fill="#dfe9d6"/><path d="M2 2h6l1.5 1.5-1 2 .5 3-1.5 2-2 1.5h-3.5z" fill="#c42a17"/><circle cx="4.6" cy="4.2" r="1.3" fill="#e6e020"/><path d="M14 12h-7.5l.5-3 2.5-2.5h4.5z" fill="#f0a012"/><circle cx="11" cy="9" r="1.3" fill="#111"/></svg>
<div class="t" style="right:1372.1px;top:389.04px;letter-spacing:-0.7px">12.114 B</div>
<div class="t" style="left:322px;top:389.04px;letter-spacing:-0.25px">PNG image</div>
<div class="t" style="left:499.7px;top:389.04px;letter-spacing:-0.7px">01.04.2012</div>
<div class="t" style="left:559.5px;top:389.04px;letter-spacing:-0.6px">12:40:08</div>
<div class="t" style="left:636px;top:389.04px;">a</div>
<svg class="a" style="left:6px;top:408px" width="16" height="14" viewBox="0 0 16 14"><rect x="0.5" y="0.5" width="15" height="13" fill="#fff" stroke="#8a8a8a"/><rect x="2" y="2" width="12" height="10" fill="#dfe9d6"/><path d="M2 2h6l1.5 1.5-1 2 .5 3-1.5 2-2 1.5h-3.5z" fill="#c42a17"/><circle cx="4.6" cy="4.2" r="1.3" fill="#e6e020"/><path d="M14 12h-7.5l.5-3 2.5-2.5h4.5z" fill="#f0a012"/><circle cx="11" cy="9" r="1.3" fill="#111"/></svg>
<div class="t" style="right:1372.1px;top:408.04px;letter-spacing:-0.7px">6.768 B</div>
<div class="t" style="left:322px;top:408.04px;letter-spacing:-0.25px">PNG image</div>
<div class="t" style="left:499.7px;top:408.04px;letter-spacing:-0.7px">01.04.2012</div>
<div class="t" style="left:559.5px;top:408.04px;letter-spacing:-0.6px">12:38:02</div>
<div class="t" style="left:636px;top:408.04px;">a</div>
<svg class="a" style="left:6px;top:427px" width="16" height="14" viewBox="0 0 16 14"><rect x="0.5" y="0.5" width="15" height="13" fill="#fff" stroke="#8a8a8a"/><rect x="2" y="2" width="12" height="10" fill="#dfe9d6"/><path d="M2 2h6l1.5 1.5-1 2 .5 3-1.5 2-2 1.5h-3.5z" fill="#c42a17"/><circle cx="4.6" cy="4.2" r="1.3" fill="#e6e020"/><path d="M14 12h-7.5l.5-3 2.5-2.5h4.5z" fill="#f0a012"/><circle cx="11" cy="9" r="1.3" fill="#111"/></svg>
<div class="t" style="right:1372.1px;top:427.04px;letter-spacing:-0.7px">4.164 B</div>
<div class="t" style="left:322px;top:427.04px;letter-spacing:-0.25px">PNG image</div>
<div class="t" style="left:499.7px;top:427.04px;letter-spacing:-0.7px">31.03.2012</div>
<div class="t" style="left:559.5px;top:427.04px;letter-spacing:-0.6px">16:20:10</div>
<div class="t" style="left:636px;top:427.04px;">a</div>
<svg class="a" style="left:6px;top:446px" width="16" height="14" viewBox="0 0 16 14"><rect x="0.5" y="0.5" width="15" height="13" fill="#fff" stroke="#8a8a8a"/><rect x="2" y="2" width="12" height="10" fill="#dfe9d6"/><path d="M2 2h6l1.5 1.5-1 2 .5 3-1.5 2-2 1.5h-3.5z" fill="#c42a17"/><circle cx="4.6" cy="4.2" r="1.3" fill="#e6e020"/><path d="M14 12h-7.5l.5-3 2.5-2.5h4.5z" fill="#f0a012"/><circle cx="11" cy="9" r="1.3" fill="#111"/></svg>
<div class="t" style="right:1372.1px;top:446.04px;letter-spacing:-0.7px">49.646 B</div>
<div class="t" style="left:322px;top:446.04px;letter-spacing:-0.25px">PNG image</div>
<div class="t" style="left:499.7px;top:446.04px;letter-spacing:-0.7px">31.03.2012</div>
<div class="t" style="left:559.5px;top:446.04px;letter-spacing:-0.6px">16:10:34</div>
<div class="t" style="left:636px;top:446.04px;">a</div>
<svg class="a" style="left:6px;top:465px" width="16" height="14" viewBox="0 0 16 14"><rect x="0.5" y="0.5" width="15" height="13" fill="#fff" stroke="#8a8a8a"/><rect x="2" y="2" width="12" height="10" fill="#dfe9d6"/><path d="M2 2h6l1.5 1.5-1 2 .5 3-1.5 2-2 1.5h-3.5z" fill="#c42a17"/><circle cx="4.6" cy="4.2" r="1.3" fill="#e6e020"/><path d="M14 12h-7.5l.5-3 2.5-2.5h4.5z" fill="#f0a012"/><circle cx="11" cy="9" r="1.3" fill="#111"/></svg>
<div class="t" style="right:1372.1px;top:465.04px;letter-spacing:-0.7px">76.910 B</div>
<div class="t" style="left:322px;top:465.04px;letter-spacing:-0.25px">PNG image</div>
<div class="t" style="left:499.7px;top:465.04px;letter-spacing:-0.7px">31.03.2012</div>
<div class="t" style="left:559.5px;top:465.04px;letter-spacing:-0.6px">16:05:22</div>
<div class="t" style="left:636px;top:465.04px;">a</div>
<svg class="a" style="left:6px;top:484px" width="16" height="14" viewBox="0 0 16 14"><rect x="0.5" y="0.5" width="15" height="13" fill="#fff" stroke="#8a8a8a"/><rect x="2" y="2" width="12" height="10" fill="#dfe9d6"/><path d="M2 2h6l1.5 1.5-1 2 .5 3-1.5 2-2 1.5h-3.5z" fill="#c42a17"/><circle cx="4.6" cy="4.2" r="1.3" fill="#e6e020"/><path d="M14 12h-7.5l.5-3 2.5-2.5h4.5z" fill="#f0a012"/><circle cx="11" cy="9" r="1.3" fill="#111"/></svg>
<div class="t" style="right:1372.1px;top:484.04px;letter-spacing:-0.7px">94.008 B</div>
<div class="t" style="left:322px;top:484.04px;letter-spacing:-0.25px">PNG image</div>
<div class="t" style="left:499.7px;top:484.04px;letter-spacing:-0.7px">31.03.2012</div>
<div class="t" style="left:559.5px;top:484.04px;letter-spacing:-0.6px">16:03:00</div>
<div class="t" style="left:636px;top:484.04px;">a</div>
<svg class="a" style="left:6px;top:503px" width="16" height="14" viewBox="0 0 16 14"><rect x="0.5" y="0.5" width="15" height="13" fill="#fff" stroke="#8a8a8a"/><rect x="2" y="2" width="12" height="10" fill="#dfe9d6"/><path d="M2 2h6l1.5 1.5-1 2 .5 3-1.5 2-2 1.5h-3.5z" fill="#c42a17"/><circle cx="4.6" cy="4.2" r="1.3" fill="#e6e020"/><path d="M14 12h-7.5l.5-3 2.5-2.5h4.5z" fill="#f0a012"/><circle cx="11" cy="9" r="1.3" fill="#111"/></svg>
<div class="t" style="right:1372.1px;top:503.04px;letter-spacing:-0.7px">43.456 B</div>
<div class="t" style="left:322px;top:503.04px;letter-spacing:-0.25px">PNG image</div>
<div class="t" style="left:499.7px;top:503.04px;letter-spacing:-0.7px">31.03.2012</div>
<div class="t" style="left:559.5px;top:503.04px;letter-spacing:-0.6px">15:54:12</div>
<div class="t" style="left:636px;top:503.04px;">a</div>
<svg class="a" style="left:6px;top:522px" width="16" height="14" viewBox="0 0 16 14"><rect x="0.5" y="0.5" width="15" height="13" fill="#fff" stroke="#8a8a8a"/><rect x="2" y="2" width="12" height="10" fill="#dfe9d6"/><path d="M2 2h6l1.5 1.5-1 2 .5 3-1.5 2-2 1.5h-3.5z" fill="#c42a17"/><circle cx="4.6" cy="4.2" r="1.3" fill="#e6e020"/><path d="M14 12h-7.5l.5-3 2.5-2.5h4.5z" fill="#f0a012"/><circle cx="11" cy="9" r="1.3" fill="#111"/></svg>
<div class="t" style="right:1372.1px;top:522.04px;letter-spacing:-0.7px">21.198 B</div>
<div class="t" style="left:322px;top:522.04px;letter-spacing:-0.25px">PNG image</div>
<div class="t" style="left:499.7px;top:522.04px;letter-spacing:-0.7px">26.03.2012</div>
<div class="t" style="left:559.5px;top:522.04px;letter-spacing:-0.6px">16:38:06</div>
<div class="t" style="left:636px;top:522.04px;">a</div>
<svg class="a" style="left:6px;top:541px" width="16" height="14" viewBox="0 0 16 14"><rect x="0.5" y="0.5" width="15" height="13" fill="#fff" stroke="#8a8a8a"/><rect x="2" y="2" width="12" height="10" fill="#dfe9d6"/><path d="M2 2h6l1.5 1.5-1 2 .5 3-1.5 2-2 1.5h-3.5z" fill="#c42a17"/><circle cx="4.6" cy="4.2" r="1.3" fill="#e6e020"/><path d="M14 12h-7.5l.5-3 2.5-2.5h4.5z" fill="#f0a012"/><circle cx="11" cy="9" r="1.3" fill="#111"/></svg>
<div class="t" style="right:1372.1px;top:541.04px;letter-spacing:-0.7px">30.711 B</div>
<div class="t" style="left:322px;top:541.04px;letter-spacing:-0.25px">PNG image</div>
<div class="t" style="left:499.7px;top:541.04px;letter-spacing:-0.7px">26.03.2012</div>
<div class="t" style="left:559.5px;top:541.04px;letter-spacing:-0.6px">16:36:46</div>
<div class="t" style="left:636px;top:541.04px;">a</div>
<svg class="a" style="left:6px;top:560px" width="16" height="14" viewBox="0 0 16 14"><rect x="0.5" y="0.5" width="15" height="13" fill="#fff" stroke="#8a8a8a"/><rect x="2" y="2" width="12" height="10" fill="#dfe9d6"/><path d="M2 2h6l1.5 1.5-1 2 .5 3-1.5 2-2 1.5h-3.5z" fill="#c42a17"/><circle cx="4.6" cy="4.2" r="1.3" fill="#e6e020"/><path d="M14 12h-7.5l.5-3 2.5-2.5h4.5z" fill="#f0a012"/><circle cx="11" cy="9" r="1.3" fill="#111"/></svg>
<div class="t" style="right:1372.1px;top:560.04px;letter-spacing:-0.7px">10.321 B</div>
<div class="t" style="left:322px;top:560.04px;letter-spacing:-0.25px">PNG image</div>
<div class="t" style="left:499.7px;top:560.04px;letter-spacing:-0.7px">26.03.2012</div>
<div class="t" style="left:559.5px;top:560.04px;letter-spacing:-0.6px">16:26:32</div>
<div class="t" style="left:636px;top:560.04px;">a</div>
<svg class="a" style="left:6px;top:579px" width="16" height="14" viewBox="0 0 16 14"><rect x="0.5" y="0.5" width="15" height="13" fill="#fff" stroke="#8a8a8a"/><rect x="2" y="2" width="12" height="10" fill="#dfe9d6"/><path d="M2 2h6l1.5 1.5-1 2 .5 3-1.5 2-2 1.5h-3.5z" fill="#c42a17"/><circle cx="4.6" cy="4.2" r="1.3" fill="#e6e020"/><path d="M14 12h-7.5l.5-3 2.5-2.5h4.5z" fill="#f0a012"/><circle cx="11" cy="9" r="1.3" fill="#111"/></svg>
<div class="t" style="right:1372.1px;top:579.04px;letter-spacing:-0.7px">39.394 B</div>
<div class="t" style="left:322px;top:579.04px;letter-spacing:-0.25px">PNG image</div>
<div class="t" style="left:499.7px;top:579.04px;letter-spacing:-0.7px">26.03.2012</div>
<div class="t" style="left:559.5px;top:579.04px;letter-spacing:-0.6px">14:45:16</div>
<div class="t" style="left:636px;top:579.04px;">a</div>
<svg class="a" style="left:6px;top:598px" width="16" height="14" viewBox="0 0 16 14"><rect x="0.5" y="0.5" width="15" height="13" fill="#fff" stroke="#8a8a8a"/><rect x="2" y="2" width="12" height="10" fill="#dfe9d6"/><path d="M2 2h6l1.5 1.5-1 2 .5 3-1.5 2-2 1.5h-3.5z" fill="#c42a17"/><circle cx="4.6" cy="4.2" r="1.3" fill="#e6e020"/><path d="M14 12h-7.5l.5-3 2.5-2.5h4.5z" fill="#f0a012"/><circle cx="11" cy="9" r="1.3" fill="#111"/></svg>
<div class="t" style="right:1372.1px;top:598.04px;letter-spacing:-0.7px">38.286 B</div>
<div class="t" style="left:322px;top:598.04px;letter-spacing:-0.25px">PNG image</div>
<div class="t" style="left:499.7px;top:598.04px;letter-spacing:-0.7px">26.03.2012</div>
<div class="t" style="left:559.5px;top:598.04px;letter-spacing:-0.6px">14:45:16</div>
<div class="t" style="left:636px;top:598.04px;">a</div>
<svg class="a" style="left:6px;top:617px" width="16" height="14" viewBox="0 0 16 14"><rect x="0.5" y="0.5" width="15" height="13" fill="#fff" stroke="#8a8a8a"/><rect x="2" y="2" width="12" height="10" fill="#dfe9d6"/><path d="M2 2h6l1.5 1.5-1 2 .5 3-1.5 2-2 1.5h-3.5z" fill="#c42a17"/><circle cx="4.6" cy="4.2" r="1.3" fill="#e6e020"/><path d="M14 12h-7.5l.5-3 2.5-2.5h4.5z" fill="#f0a012"/><circle cx="11" cy="9" r="1.3" fill="#111"/></svg>
<div class="t" style="right:1372.1px;top:617.04px;letter-spacing:-0.7px">35.549 B</div>
<div class="t" style="left:322px;top:617.04px;letter-spacing:-0.25px">PNG image</div>
<div class="t" style="left:499.7px;top:617.04px;letter-spacing:-0.7px">26.03.2012</div>
<div class="t" style="left:559.5px;top:617.04px;letter-spacing:-0.6px">14:45:16</div>
<div class="t" style="left:636px;top:617.04px;">a</div>
<svg class="a" style="left:6px;top:636px" width="16" height="14" viewBox="0 0 16 14"><rect x="0.5" y="0.5" width="15" height="13" fill="#fff" stroke="#8a8a8a"/><rect x="2" y="2" width="12" height="10" fill="#dfe9d6"/><path d="M2 2h6l1.5 1.5-1 2 .5 3-1.5 2-2 1.5h-3.5z" fill="#c42a17"/><circle cx="4.6" cy="4.2" r="1.3" fill="#e6e020"/><path d="M14 12h-7.5l.5-3 2.5-2.5h4.5z" fill="#f0a012"/><circle cx="11" cy="9" r="1.3" fill="#111"/></svg>
<div class="t" style="right:1372.1px;top:636.04px;letter-spacing:-0.7px">31.531 B</div>
<div class="t" style="left:322px;top:636.04px;letter-spacing:-0.25px">PNG image</div>
<div class="t" style="left:499.7px;top:636.04px;letter-spacing:-0.7px">26.03.2012</div>
<div class="t" style="left:559.5px;top:636.04px;letter-spacing:-0.6px">14:45:16</div>
<div class="t" style="left:636px;top:636.04px;">a</div>
<svg class="a" style="left:6px;top:655px" width="16" height="14" viewBox="0 0 16 14"><rect x="0.5" y="0.5" width="15" height="13" fill="#fff" stroke="#8a8a8a"/><rect x="2" y="2" width="12" height="10" fill="#dfe9d6"/><path d="M2 2h6l1.5 1.5-1 2 .5 3-1.5 2-2 1.5h-3.5z" fill="#c42a17"/><circle cx="4.6" cy="4.2" r="1.3" fill="#e6e020"/><path d="M14 12h-7.5l.5-3 2.5-2.5h4.5z" fill="#f0a012"/><circle cx="11" cy="9" r="1.3" fill="#111"/></svg>
<div class="t" style="right:1372.1px;top:655.04px;letter-spacing:-0.7px">97.955 B</div>
<div class="t" style="left:322px;top:655.04px;letter-spacing:-0.25px">PNG image</div>
<div class="t" style="left:499.7px;top:655.04px;letter-spacing:-0.7px">26.03.2012</div>
<div class="t" style="left:559.5px;top:655.04px;letter-spacing:-0.6px">14:37:42</div>
<div class="t" style="left:636px;top:655.04px;">a</div>
<svg class="a" style="left:6px;top:674px" width="16" height="14" viewBox="0 0 16 14"><rect x="0.5" y="0.5" width="15" height="13" fill="#fff" stroke="#8a8a8a"/><rect x="2" y="2" width="12" height="10" fill="#dfe9d6"/><path d="M2 2h6l1.5 1.5-1 2 .5 3-1.5 2-2 1.5h-3.5z" fill="#c42a17"/><circle cx="4.6" cy="4.2" r="1.3" fill="#e6e020"/><path d="M14 12h-7.5l.5-3 2.5-2.5h4.5z" fill="#f0a012"/><circle cx="11" cy="9" r="1.3" fill="#111"/></svg>
<div class="t" style="right:1372.1px;top:674.04px;letter-spacing:-0.7px">94.504 B</div>
<div class="t" style="left:322px;top:674.04px;letter-spacing:-0.25px">PNG image</div>
<div class="t" style="left:499.7px;top:674.04px;letter-spacing:-0.7px">26.03.2012</div>
<div class="t" style="left:559.5px;top:674.04px;letter-spacing:-0.6px">14:17:12</div>
<div class="t" style="left:636px;top:674.04px;">a</div>
<svg class="a" style="left:6px;top:693px" width="16" height="14" viewBox="0 0 16 14"><rect x="0.5" y="0.5" width="15" height="13" fill="#fff" stroke="#8a8a8a"/><rect x="2" y="2" width="12" height="10" fill="#dfe9d6"/><path d="M2 2h6l1.5 1.5-1 2 .5 3-1.5 2-2 1.5h-3.5z" fill="#c42a17"/><circle cx="4.6" cy="4.2" r="1.3" fill="#e6e020"/><path d="M14 12h-7.5l.5-3 2.5-2.5h4.5z" fill="#f0a012"/><circle cx="11" cy="9" r="1.3" fill="#111"/></svg>
<div class="t" style="right:1372.1px;top:693.04px;letter-spacing:-0.7px">104 KiB</div>
<div class="t" style="left:322px;top:693.04px;letter-spacing:-0.25px">PNG image</div>
<div class="t" style="left:499.7px;top:693.04px;letter-spacing:-0.7px">26.03.2012</div>
<div class="t" style="left:559.5px;top:693.04px;letter-spacing:-0.6px">14:16:44</div>
<div class="t" style="left:636px;top:693.04px;">a</div>
<svg class="a" style="left:6px;top:712px" width="16" height="14" viewBox="0 0 16 14"><rect x="0.5" y="0.5" width="15" height="13" fill="#fff" stroke="#8a8a8a"/><rect x="2" y="2" width="12" height="10" fill="#dfe9d6"/><path d="M2 2h6l1.5 1.5-1 2 .5 3-1.5 2-2 1.5h-3.5z" fill="#c42a17"/><circle cx="4.6" cy="4.2" r="1.3" fill="#e6e020"/><path d="M14 12h-7.5l.5-3 2.5-2.5h4.5z" fill="#f0a012"/><circle cx="11" cy="9" r="1.3" fill="#111"/></svg>
<div class="t" style="right:1372.1px;top:712.04px;letter-spacing:-0.7px">98.008 B</div>
<div class="t" style="left:322px;top:712.04px;letter-spacing:-0.25px">PNG image</div>
<div class="t" style="left:499.7px;top:712.04px;letter-spacing:-0.7px">26.03.2012</div>
<div class="t" style="left:559.5px;top:712.04px;letter-spacing:-0.6px">11:25:32</div>
<div class="t" style="left:636px;top:712.04px;">a</div>
<svg class="a" style="left:6px;top:731px" width="16" height="14" viewBox="0 0 16 14"><rect x="0.5" y="0.5" width="15" height="13" fill="#fff" stroke="#8a8a8a"/><rect x="2" y="2" width="12" height="10" fill="#bfe3f5"/><rect x="2" y="2" width="12" height="1.5" fill="#2f86d8"/><path d="M4 4.5h3v1h-3zM9 3.5h3v1.5h-3z" fill="#fff"/><path d="M2 6c3 1 6 3 12 3.5v1.5h-12z" fill="#3a8a40"/><rect x="2" y="9.5" width="12" height="2.5" fill="#3c78c0"/></svg>
<div class="t" style="right:1372.1px;top:731.04px;letter-spacing:-0.7px">338 KiB</div>
<div class="t" style="left:322px;top:731.04px;letter-spacing:-0.63px">JPEG image</div>
<div class="t" style="left:499.7px;top:731.04px;letter-spacing:-0.7px">23.03.2012</div>
<div class="t" style="left:559.5px;top:731.04px;letter-spacing:-0.6px">15:39:10</div>
<div class="t" style="left:636px;top:731.04px;">a</div>
<svg class="a" style="left:6px;top:750px" width="16" height="14" viewBox="0 0 16 14"><rect x="0.5" y="0.5" width="15" height="13" fill="#fff" stroke="#8a8a8a"/><rect x="2" y="2" width="12" height="10" fill="#bfe3f5"/><rect x="2" y="2" width="12" height="1.5" fill="#2f86d8"/><path d="M4 4.5h3v1h-3zM9 3.5h3v1.5h-3z" fill="#fff"/><path d="M2 6c3 1 6 3 12 3.5v1.5h-12z" fill="#3a8a40"/><rect x="2" y="9.5" width="12" height="2.5" fill="#3c78c0"/></svg>
<div class="t" style="right:1372.1px;top:750.04px;letter-spacing:-0.7px">343 KiB</div>
<div class="t" style="left:322px;top:750.04px;letter-spacing:-0.63px">JPEG image</div>
<div class="t" style="left:499.7px;top:750.04px;letter-spacing:-0.7px">23.03.2012</div>
<div class="t" style="left:559.5px;top:750.04px;letter-spacing:-0.6px">15:38:58</div>
<div class="t" style="left:636px;top:750.04px;">a</div>
<svg class="a" style="left:6px;top:769px" width="16" height="14" viewBox="0 0 16 14"><rect x="0.5" y="0.5" width="15" height="13" fill="#fff" stroke="#8a8a8a"/><rect x="2" y="2" width="12" height="10" fill="#bfe3f5"/><rect x="2" y="2" width="12" height="1.5" fill="#2f86d8"/><path d="M4 4.5h3v1h-3zM9 3.5h3v1.5h-3z" fill="#fff"/><path d="M2 6c3 1 6 3 12 3.5v1.5h-12z" fill="#3a8a40"/><rect x="2" y="9.5" width="12" height="2.5" fill="#3c78c0"/></svg>
<div class="t" style="right:1372.1px;top:769.04px;letter-spacing:-0.7px">327 KiB</div>
<div class="t" style="left:322px;top:769.04px;letter-spacing:-0.63px">JPEG image</div>
<div class="t" style="left:499.7px;top:769.04px;letter-spacing:-0.7px">23.03.2012</div>
<div class="t" style="left:559.5px;top:769.04px;letter-spacing:-0.6px">15:38:44</div>
<div class="t" style="left:636px;top:769.04px;">a</div>
<svg class="a" style="left:6px;top:788px" width="16" height="14" viewBox="0 0 16 14"><rect x="0.5" y="0.5" width="15" height="13" fill="#fff" stroke="#8a8a8a"/><rect x="2" y="2" width="12" height="10" fill="#bfe3f5"/><rect x="2" y="2" width="12" height="1.5" fill="#2f86d8"/><path d="M4 4.5h3v1h-3zM9 3.5h3v1.5h-3z" fill="#fff"/><path d="M2 6c3 1 6 3 12 3.5v1.5h-12z" fill="#3a8a40"/><rect x="2" y="9.5" width="12" height="2.5" fill="#3c78c0"/></svg>
<div class="t" style="right:1372.1px;top:788.04px;letter-spacing:-0.7px">328 KiB</div>
<div class="t" style="left:322px;top:788.04px;letter-spacing:-0.63px">JPEG image</div>
<div class="t" style="left:499.7px;top:788.04px;letter-spacing:-0.7px">23.03.2012</div>
<div class="t" style="left:559.5px;top:788.04px;letter-spacing:-0.6px">15:38:30</div>
<div class="t" style="left:636px;top:788.04px;">a</div>
<svg class="a" style="left:6px;top:807px" width="16" height="14" viewBox="0 0 16 14"><rect x="0.5" y="0.5" width="15" height="13" fill="#fff" stroke="#8a8a8a"/><rect x="2" y="2" width="12" height="10" fill="#bfe3f5"/><rect x="2" y="2" width="12" height="1.5" fill="#2f86d8"/><path d="M4 4.5h3v1h-3zM9 3.5h3v1.5h-3z" fill="#fff"/><path d="M2 6c3 1 6 3 12 3.5v1.5h-12z" fill="#3a8a40"/><rect x="2" y="9.5" width="12" height="2.5" fill="#3c78c0"/></svg>
<div class="t" style="right:1372.1px;top:807.04px;letter-spacing:-0.7px">331 KiB</div>
<div class="t" style="left:322px;top:807.04px;letter-spacing:-0.63px">JPEG image</div>
<div class="t" style="left:499.7px;top:807.04px;letter-spacing:-0.7px">23.03.2012</div>
<div class="t" style="left:559.5px;top:807.04px;letter-spacing:-0.6px">15:38:18</div>
<div class="t" style="left:636px;top:807.04px;">a</div>
<svg class="a" style="left:6px;top:826px" width="16" height="14" viewBox="0 0 16 14"><rect x="0.5" y="0.5" width="15" height="13" fill="#fff" stroke="#8a8a8a"/><rect x="2" y="2" width="12" height="10" fill="#bfe3f5"/><rect x="2" y="2" width="12" height="1.5" fill="#2f86d8"/><path d="M4 4.5h3v1h-3zM9 3.5h3v1.5h-3z" fill="#fff"/><path d="M2 6c3 1 6 3 12 3.5v1.5h-12z" fill="#3a8a40"/><rect x="2" y="9.5" width="12" height="2.5" fill="#3c78c0"/></svg>
<div class="t" style="right:1372.1px;top:826.04px;letter-spacing:-0.7px">330 KiB</div>
<div class="t" style="left:322px;top:826.04px;letter-spacing:-0.63px">JPEG image</div>
<div class="t" style="left:499.7px;top:826.04px;letter-spacing:-0.7px">23.03.2012</div>
<div class="t" style="left:559.5px;top:826.04px;letter-spacing:-0.6px">15:38:02</div>
<div class="t" style="left:636px;top:826.04px;">a</div>
<svg class="a" style="left:6px;top:845px" width="16" height="14" viewBox="0 0 16 14"><rect x="0.5" y="0.5" width="15" height="13" fill="#fff" stroke="#8a8a8a"/><rect x="2" y="2" width="12" height="10" fill="#bfe3f5"/><rect x="2" y="2" width="12" height="1.5" fill="#2f86d8"/><path d="M4 4.5h3v1h-3zM9 3.5h3v1.5h-3z" fill="#fff"/><path d="M2 6c3 1 6 3 12 3.5v1.5h-12z" fill="#3a8a40"/><rect x="2" y="9.5" width="12" height="2.5" fill="#3c78c0"/></svg>
<div class="t" style="right:1372.1px;top:845.04px;letter-spacing:-0.7px">338 KiB</div>
<div class="t" style="left:322px;top:845.04px;letter-spacing:-0.63px">JPEG image</div>
<div class="t" style="left:499.7px;top:845.04px;letter-spacing:-0.7px">23.03.2012</div>
<div class="t" style="left:559.5px;top:845.04px;letter-spacing:-0.6px">15:37:46</div>
<div class="t" style="left:636px;top:845.04px;">a</div>
<svg class="a" style="left:6px;top:864px" width="16" height="14" viewBox="0 0 16 14"><rect x="0.5" y="0.5" width="15" height="13" fill="#fff" stroke="#8a8a8a"/><rect x="2" y="2" width="12" height="10" fill="#bfe3f5"/><rect x="2" y="2" width="12" height="1.5" fill="#2f86d8"/><path d="M4 4.5h3v1h-3zM9 3.5h3v1.5h-3z" fill="#fff"/><path d="M2 6c3 1 6 3 12 3.5v1.5h-12z" fill="#3a8a40"/><rect x="2" y="9.5" width="12" height="2.5" fill="#3c78c0"/></svg>
<div class="t" style="right:1372.1px;top:864.04px;letter-spacing:-0.7px">318 KiB</div>
<div class="t" style="left:322px;top:864.04px;letter-spacing:-0.63px">JPEG image</div>
<div class="t" style="left:499.7px;top:864.04px;letter-spacing:-0.7px">23.03.2012</div>
<div class="t" style="left:559.5px;top:864.04px;letter-spacing:-0.6px">15:37:30</div>
<div class="t" style="left:636px;top:864.04px;">a</div>
<svg class="a" style="left:6px;top:883px" width="16" height="14" viewBox="0 0 16 14"><rect x="0.5" y="0.5" width="15" height="13" fill="#fff" stroke="#8a8a8a"/><rect x="2" y="2" width="12" height="10" fill="#bfe3f5"/><rect x="2" y="2" width="12" height="1.5" fill="#2f86d8"/><path d="M4 4.5h3v1h-3zM9 3.5h3v1.5h-3z" fill="#fff"/><path d="M2 6c3 1 6 3 12 3.5v1.5h-12z" fill="#3a8a40"/><rect x="2" y="9.5" width="12" height="2.5" fill="#3c78c0"/></svg>
<div class="t" style="right:1372.1px;top:883.04px;letter-spacing:-0.7px">319 KiB</div>
<div class="t" style="left:322px;top:883.04px;letter-spacing:-0.63px">JPEG image</div>
<div class="t" style="left:499.7px;top:883.04px;letter-spacing:-0.7px">23.03.2012</div>
<div class="t" style="left:559.5px;top:883.04px;letter-spacing:-0.6px">15:37:18</div>
<div class="t" style="left:636px;top:883.04px;">a</div>
<svg class="a" style="left:6px;top:902px" width="16" height="14" viewBox="0 0 16 14"><rect x="0.5" y="0.5" width="15" height="13" fill="#fff" stroke="#8a8a8a"/><rect x="2" y="2" width="12" height="10" fill="#bfe3f5"/><rect x="2" y="2" width="12" height="1.5" fill="#2f86d8"/><path d="M4 4.5h3v1h-3zM9 3.5h3v1.5h-3z" fill="#fff"/><path d="M2 6c3 1 6 3 12 3.5v1.5h-12z" fill="#3a8a40"/><rect x="2" y="9.5" width="12" height="2.5" fill="#3c78c0"/></svg>
<div class="t" style="right:1372.1px;top:902.04px;letter-spacing:-0.7px">328 KiB</div>
<div class="t" style="left:322px;top:902.04px;letter-spacing:-0.63px">JPEG image</div>
<div class="t" style="left:499.7px;top:902.04px;letter-spacing:-0.7px">23.03.2012</div>
<div class="t" style="left:559.5px;top:902.04px;letter-spacing:-0.6px">15:37:04</div>
<div class="t" style="left:636px;top:902.04px;">a</div>
<svg class="a" style="left:6px;top:921px" width="16" height="14" viewBox="0 0 16 14"><rect x="0.5" y="0.5" width="15" height="13" fill="#fff" stroke="#8a8a8a"/><rect x="2" y="2" width="12" height="10" fill="#bfe3f5"/><rect x="2" y="2" width="12" height="1.5" fill="#2f86d8"/><path d="M4 4.5h3v1h-3zM9 3.5h3v1.5h-3z" fill="#fff"/><path d="M2 6c3 1 6 3 12 3.5v1.5h-12z" fill="#3a8a40"/><rect x="2" y="9.5" width="12" height="2.5" fill="#3c78c0"/></svg>
<div class="t" style="right:1372.1px;top:921.04px;letter-spacing:-0.7px">343 KiB</div>
<div class="t" style="left:322px;top:921.04px;letter-spacing:-0.63px">JPEG image</div>
<div class="t" style="left:499.7px;top:921.04px;letter-spacing:-0.7px">23.03.2012</div>
<div class="t" style="left:559.5px;top:921.04px;letter-spacing:-0.6px">15:36:46</div>
<div class="t" style="left:636px;top:921.04px;">a</div>
<svg class="a" style="left:6px;top:940px" width="16" height="14" viewBox="0 0 16 14"><rect x="0.5" y="0.5" width="15" height="13" fill="#fff" stroke="#8a8a8a"/><rect x="2" y="2" width="12" height="10" fill="#bfe3f5"/><rect x="2" y="2" width="12" height="1.5" fill="#2f86d8"/><path d="M4 4.5h3v1h-3zM9 3.5h3v1.5h-3z" fill="#fff"/><path d="M2 6c3 1 6 3 12 3.5v1.5h-12z" fill="#3a8a40"/><rect x="2" y="9.5" width="12" height="2.5" fill="#3c78c0"/></svg>
<div class="t" style="right:1372.1px;top:940.04px;letter-spacing:-0.7px">334 KiB</div>
<div class="t" style="left:322px;top:940.04px;letter-spacing:-0.63px">JPEG image</div>
<div class="t" style="left:499.7px;top:940.04px;letter-spacing:-0.7px">23.03.2012</div>
<div class="t" style="left:559.5px;top:940.04px;letter-spacing:-0.6px">15:36:30</div>
<div class="t" style="left:636px;top:940.04px;">a</div>
<svg class="a" style="left:6px;top:959px" width="16" height="14" viewBox="0 0 16 14"><rect x="0.5" y="0.5" width="15" height="13" fill="#fff" stroke="#8a8a8a"/><rect x="2" y="2" width="12" height="10" fill="#dfe9d6"/><path d="M2 2h6l1.5 1.5-1 2 .5 3-1.5 2-2 1.5h-3.5z" fill="#c42a17"/><circle cx="4.6" cy="4.2" r="1.3" fill="#e6e020"/><path d="M14 12h-7.5l.5-3 2.5-2.5h4.5z" fill="#f0a012"/><circle cx="11" cy="9" r="1.3" fill="#111"/></svg>
<div class="t" style="right:1372.1px;top:959.04px;letter-spacing:-0.7px">3.639 B</div>
<div class="t" style="left:322px;top:959.04px;letter-spacing:-0.25px">PNG image</div>
<div class="t" style="left:499.7px;top:959.04px;letter-spacing:-0.7px">22.03.2012</div>
<div class="t" style="left:559.5px;top:959.04px;letter-spacing:-0.6px">17:05:26</div>
<div class="t" style="left:636px;top:959.04px;">a</div>
<svg class="a" style="left:6px;top:978px" width="16" height="14" viewBox="0 0 16 14"><rect x="0.5" y="0.5" width="15" height="13" fill="#fff" stroke="#8a8a8a"/><rect x="2" y="2" width="12" height="10" fill="#dfe9d6"/><path d="M2 2h6l1.5 1.5-1 2 .5 3-1.5 2-2 1.5h-3.5z" fill="#c42a17"/><circle cx="4.6" cy="4.2" r="1.3" fill="#e6e020"/><path d="M14 12h-7.5l.5-3 2.5-2.5h4.5z" fill="#f0a012"/><circle cx="11" cy="9" r="1.3" fill="#111"/></svg>
<div class="t" style="right:1372.1px;top:978.04px;letter-spacing:-0.7px">13.752 B</div>
<div class="t" style="left:322px;top:978.04px;letter-spacing:-0.25px">PNG image</div>
<div class="t" style="left:499.7px;top:978.04px;letter-spacing:-0.7px">19.03.2012</div>
<div class="t" style="left:559.5px;top:978.04px;letter-spacing:-0.6px">01:22:18</div>
<div class="t" style="left:636px;top:978.04px;">a</div>
<svg class="a" style="left:6px;top:997px" width="16" height="14" viewBox="0 0 16 14"><rect x="0.5" y="0.5" width="15" height="13" fill="#fff" stroke="#8a8a8a"/><rect x="2" y="2" width="12" height="10" fill="#dfe9d6"/><path d="M2 2h6l1.5 1.5-1 2 .5 3-1.5 2-2 1.5h-3.5z" fill="#c42a17"/><circle cx="4.6" cy="4.2" r="1.3" fill="#e6e020"/><path d="M14 12h-7.5l.5-3 2.5-2.5h4.5z" fill="#f0a012"/><circle cx="11" cy="9" r="1.3" fill="#111"/></svg>
<div class="t" style="right:1372.1px;top:997.04px;letter-spacing:-0.7px">2.114 B</div>
<div class="t" style="left:322px;top:997.04px;letter-spacing:-0.25px">PNG image</div>
<div class="t" style="left:499.7px;top:997.04px;letter-spacing:-0.7px">19.03.2012</div>
<div class="t" style="left:559.5px;top:997.04px;letter-spacing:-0.6px">01:20:02</div>
<div class="t" style="left:636px;top:997.04px;">a</div>
<div class="a" style="left:0px;top:1007px;width:770px;height:3px;background:#f0f0f0"></div>
<div class="a" style="left:0px;top:1006px;width:770px;height:1px;background:#80878f"></div>
<div class="a" style="left:752px;top:172px;width:16px;height:834px;background:linear-gradient(90deg,#e3e3e3,#f0f0f0 40%,#f0f0f0)"></div>
<svg class="a" style="left:755.5px;top:178px" width="9" height="5" viewBox="0 0 9 5"><path d="M0 5l4.5-5 4.5 5z" fill="#3a3a3a"/></svg>
<div class="a" style="left:753px;top:190px;width:14px;height:548px;border:1px solid #979797;border-radius:2px;background:linear-gradient(90deg,#f5f5f5,#ececec 45%,#d8d8dc 50%,#c8c8cc)"></div>
<svg class="a" style="left:755.5px;top:996px" width="9" height="5" viewBox="0 0 9 5"><path d="M0 0h9l-4.5 5z" fill="#3a3a3a"/></svg>
<div class="a" style="left:770px;top:149px;width:5px;height:861px;background:#f0f0f0"></div>
<div class="a" style="left:775px;top:149px;width:905px;height:21px;background:#bfcddb"></div>
<div class="a" style="left:775px;top:170px;width:905px;height:1px;background:#80878f"></div>
<div class="a" style="left:775px;top:171px;width:905px;height:332px;background:#fff;border:1px solid #80878f;border-top:none"></div>
<div class="a" style="left:1662px;top:172px;width:16px;height:330px;background:linear-gradient(90deg,#e3e3e3,#f0f0f0 40%,#f0f0f0)"></div>
<svg class="a" style="left:1665.5px;top:178px" width="9" height="5" viewBox="0 0 9 5"><path d="M0 5l4.5-5 4.5 5z" fill="#3a3a3a"/></svg>
<div class="a" style="left:1663px;top:190px;width:14px;height:201px;border:1px solid #979797;border-radius:2px;background:linear-gradient(90deg,#f5f5f5,#ececec 45%,#d8d8dc 50%,#c8c8cc)"></div>
<svg class="a" style="left:1665.5px;top:493px" width="9" height="5" viewBox="0 0 9 5"><path d="M0 0h9l-4.5 5z" fill="#3a3a3a"/></svg>
<svg class="a" style="left:1665px;top:287px" width="10" height="7" viewBox="0 0 10 7"><path d="M1 .5h8M1 3h8M1 5.5h8" stroke="#555"/></svg>
<div class="a" style="left:775px;top:506px;width:905px;height:483px;background:#fff;border:1px solid #80878f"></div>
<div class="a" style="left:776px;top:517px;width:903px;height:13px;background:linear-gradient(#f6f7f8,#eff0f2)"></div>
<div class="a" style="left:776px;top:530px;width:903px;height:1px;background:#d5d5d5"></div>
<div class="a" style="left:899px;top:531px;width:1px;height:456px;background:#eef3fa"></div>
<div class="a" style="left:975px;top:531px;width:1px;height:456px;background:#eef3fa"></div>
<div class="a" style="left:1098px;top:531px;width:1px;height:456px;background:#eef3fa"></div>
<div class="a" style="left:1172px;top:531px;width:1px;height:456px;background:#eef3fa"></div>
<div class="a" style="left:1229px;top:531px;width:1px;height:456px;background:#eef3fa"></div>
<div class="a" style="left:778px;top:531px;width:1px;height:457px;background:#c4dcf8"></div>
<div class="t" style="left:779px;top:994.84px;color:#222;letter-spacing:-0.3px">0 B of 26,360 B in 0 of 11</div>
<div class="a" style="left:0px;top:1010px;width:1680px;height:40px;background:linear-gradient(#7d8ea5,#8293aa 50%,#7a8ba2)"></div>
<div class="a" style="left:0px;top:1010px;width:1680px;height:1px;background:#5d6c80"></div>
<svg class="a" style="left:8px;top:1011px" width="38" height="38" viewBox="0 0 38 38"><defs><radialGradient id="orb" cx="50%" cy="35%" r="65%"><stop offset="0" stop-color="#9fd3f0"/><stop offset=".5" stop-color="#2a78b8"/><stop offset="1" stop-color="#0a4a80"/></radialGradient></defs><circle cx="19" cy="19" r="18" fill="url(#orb)" stroke="#1b3b5e"/><path d="M9 13c3-2 6-1 9 0l-1 6c-3-1-6-2-9 0z" fill="#f25022"/><path d="M19 13c3 1 6 2 9 0l-1 6c-3 2-6 1-9 0z" fill="#7fba00"/><path d="M8 20c3-2 6-1 9 0l-1 6c-3-1-6-2-9 0z" fill="#00a4ef"/><path d="M18 20c3 1 6 2 9 0l-1 6c-3 2-6 1-9 0z" fill="#ffb900"/><ellipse cx="19" cy="10" rx="12" ry="7" fill="#fff" opacity=".25"/></svg>
<div class="a" style="left:60px;top:1011px;width:82px;height:38px;border:1px solid #5f6f84;border-radius:3px;background:linear-gradient(#d4dbe4,#aab6c6 50%,#8d9cb0)"></div>
<svg class="a" style="left:69px;top:1015px" width="30" height="30" viewBox="0 0 30 30"><path d="M2 2h8l-3 3 4 4-2 2-4-4-3 3z" fill="#1e7ef0"/><path d="M28 28h-8l3-3-4-4 2-2 4 4 3-3z" fill="#2ccf2c"/><rect x="7" y="13" width="14" height="11" rx="1.5" fill="#6a6a6a" stroke="#333"/><path d="M9.5 13v-3a4.5 4.5 0 0 1 9 0v3" stroke="#555" stroke-width="2.2" fill="none"/></svg>
<div class="t" style="left:104px;top:1023.84px;color:#fff">page -</div>
<div class="a" style="left:1667px;top:1010px;width:13px;height:40px;background:linear-gradient(90deg,#6b7b90,#5a6a80);border-left:1px solid #9aa8b8"></div>
<div class="a" style="left:366px;top:311px;width:407px;height:180px;background:#d7e3f0;border:1px solid #3b3b3b;border-radius:6px 6px 0 0"></div>
<div class="a" style="left:367px;top:312px;width:405px;height:24px;background:linear-gradient(#bccbdb,#c7d5e4 45%,#d3dfed);border-radius:5px 5px 0 0"></div>
<div class="t" style="left:373.4px;top:317.54px;color:#1e2a3a;letter-spacing:-0.5px">Error</div>
<div class="a" style="left:369px;top:336px;width:401px;height:152px;background:#fff"></div>
<div class="a" style="left:369px;top:447px;width:401px;height:41px;background:#f0f0f0"></div>
<div class="a" style="left:703px;top:316px;width:30px;height:17px;border:1px solid #7f8ca8;border-radius:3px;background:linear-gradient(#c6d2e0,#c2cfde);box-shadow:inset 0 0 0 1px #d6e0ec"></div>
<svg class="a" style="left:713px;top:318px" width="10" height="14" viewBox="0 0 10 14"><path d="M2.3 4.6a2.7 2.7 0 1 1 4.2 2.2c-1 .7-1.5 1.1-1.5 2.4" stroke="#333" stroke-width="4" fill="none"/><path d="M2.3 4.6a2.7 2.7 0 1 1 4.2 2.2c-1 .7-1.5 1.1-1.5 2.4" stroke="#f4f4f4" stroke-width="2.2" fill="none"/><rect x="3.3" y="10.3" width="3.4" height="3.2" rx="1" fill="#f4f4f4" stroke="#333" stroke-width=".9"/></svg>
<div class="a" style="left:736px;top:316px;width:30px;height:17px;border:1px solid #7f8ca8;border-radius:3px;background:linear-gradient(#c6d2e0,#c2cfde);box-shadow:inset 0 0 0 1px #d6e0ec"></div>
<svg class="a" style="left:745px;top:320px" width="13" height="10" viewBox="0 0 13 10"><path d="M2.5 2l8 6M10.5 2l-8 6" stroke="#333" stroke-width="4.4" stroke-linecap="round"/><path d="M2.5 2l8 6M10.5 2l-8 6" stroke="#f2f2f2" stroke-width="2.4" stroke-linecap="round"/></svg>
<svg class="a" style="left:381px;top:350px" width="32" height="32" viewBox="0 0 32 32"><defs><radialGradient id="rg" cx="35%" cy="30%" r="75%"><stop offset="0" stop-color="#e8565a"/><stop offset=".6" stop-color="#c01a1f"/><stop offset="1" stop-color="#9a0c10"/></radialGradient></defs><circle cx="16" cy="16" r="15.5" fill="#fff" stroke="#7a7a7a"/><circle cx="16" cy="16" r="14" fill="url(#rg)"/><path d="M10 10l12 12M22 10l-12 12" stroke="#e2e2e2" stroke-width="4"/></svg>
<div class="a" style="left:602px;top:456px;width:73px;height:23px;border:1px solid #3ca6e0;border-radius:3px;background:linear-gradient(#f2f2f2,#ebebeb 45%,#dddddd 50%,#cfcfcf);box-shadow:inset 0 0 0 1px #79d0f6"></div>
<div class="t" style="left:538.5px;width:200px;text-align:center;top:460.34px;">OK</div>
<div class="a" style="left:683px;top:456px;width:73px;height:23px;border:1px solid #707070;border-radius:3px;background:linear-gradient(#f2f2f2,#ebebeb 45%,#dddddd 50%,#cfcfcf);box-shadow:inset 0 0 0 1px #fafafa"></div>
<div class="t" style="left:619px;width:200px;text-align:center;top:460.34px;">Help</div>
<div class="a" style="left:387px;top:335px;width:364px;height:131px;background:#d7e3f0;border:1px solid #3b3b3b;border-radius:6px 6px 0 0"></div>
<div class="a" style="left:388px;top:336px;width:362px;height:24px;background:linear-gradient(#bccbdb,#c7d5e4 45%,#d3dfed);border-radius:5px 5px 0 0"></div>
<div class="t" style="left:394.4px;top:341.54px;color:#1e2a3a;letter-spacing:-0.5px">Error</div>
<div class="a" style="left:390px;top:360px;width:358px;height:103px;background:#fff"></div>
<div class="a" style="left:390px;top:422px;width:358px;height:41px;background:#f0f0f0"></div>
<div class="a" style="left:683px;top:340px;width:30px;height:17px;border:1px solid #7f8ca8;border-radius:3px;background:linear-gradient(#c6d2e0,#c2cfde);box-shadow:inset 0 0 0 1px #d6e0ec"></div>
<svg class="a" style="left:693px;top:342px" width="10" height="14" viewBox="0 0 10 14"><path d="M2.3 4.6a2.7 2.7 0 1 1 4.2 2.2c-1 .7-1.5 1.1-1.5 2.4" stroke="#333" stroke-width="4" fill="none"/><path d="M2.3 4.6a2.7 2.7 0 1 1 4.2 2.2c-1 .7-1.5 1.1-1.5 2.4" stroke="#f4f4f4" stroke-width="2.2" fill="none"/><rect x="3.3" y="10.3" width="3.4" height="3.2" rx="1" fill="#f4f4f4" stroke="#333" stroke-width=".9"/></svg>
<div class="a" style="left:715px;top:340px;width:30px;height:17px;border:1px solid #7f8ca8;border-radius:3px;background:linear-gradient(#c6d2e0,#c2cfde);box-shadow:inset 0 0 0 1px #d6e0ec"></div>
<svg class="a" style="left:724px;top:344px" width="13" height="10" viewBox="0 0 13 10"><path d="M2.5 2l8 6M10.5 2l-8 6" stroke="#333" stroke-width="4.4" stroke-linecap="round"/><path d="M2.5 2l8 6M10.5 2l-8 6" stroke="#f2f2f2" stroke-width="2.4" stroke-linecap="round"/></svg>
<svg class="a" style="left:402px;top:375px" width="32" height="32" viewBox="0 0 32 32"><defs><radialGradient id="rg" cx="35%" cy="30%" r="75%"><stop offset="0" stop-color="#e8565a"/><stop offset=".6" stop-color="#c01a1f"/><stop offset="1" stop-color="#9a0c10"/></radialGradient></defs><circle cx="16" cy="16" r="15.5" fill="#fff" stroke="#7a7a7a"/><circle cx="16" cy="16" r="14" fill="url(#rg)"/><path d="M10 10l12 12M22 10l-12 12" stroke="#e2e2e2" stroke-width="4"/></svg>
<div class="t" style="left:448px;top:376.34px;letter-spacing:-0.09px;color:#000">Server unexpectedly closed network connection.</div>
<div class="a" style="left:410px;top:431px;width:103px;height:23px;border:1px solid #3ca6e0;border-radius:3px;background:linear-gradient(#f2f2f2,#ebebeb 45%,#dddddd 50%,#cfcfcf);box-shadow:inset 0 0 0 1px #79d0f6"></div>
<div class="t" style="left:361px;width:200px;text-align:center;top:436.34px;">OK</div>
<div class="a" style="left:521px;top:431px;width:103px;height:23px;border:1px solid #707070;border-radius:3px;background:linear-gradient(#f2f2f2,#ebebeb 45%,#dddddd 50%,#cfcfcf);box-shadow:inset 0 0 0 1px #fafafa"></div>
<div class="t" style="left:472.5px;width:200px;text-align:center;top:436.34px;letter-spacing:-0.3px">Reconnect (1 s)</div>
<div class="a" style="left:632px;top:431px;width:103px;height:23px;border:1px solid #707070;border-radius:3px;background:linear-gradient(#f2f2f2,#ebebeb 45%,#dddddd 50%,#cfcfcf);box-shadow:inset 0 0 0 1px #fafafa"></div>
<div class="t" style="left:583px;width:200px;text-align:center;top:436.34px;">Help</div>
<div class="red" style="left:60px;top:0px;width:103px;height:31px"></div>
<div class="red" style="left:21px;top:43px;width:286px;height:53px"></div>
<div class="red" style="left:21px;top:191px;width:217px;height:717px"></div>
<div class="red" style="left:21px;top:149px;width:60px;height:67px"></div>
<div class="red" style="left:770px;top:142px;width:503px;height:635px"></div>
<div class="red" style="left:137px;top:999px;width:1530px;height:56px"></div>
<div class="red" style="left:21px;top:874px;width:208px;height:135px"></div>
</body></html>
